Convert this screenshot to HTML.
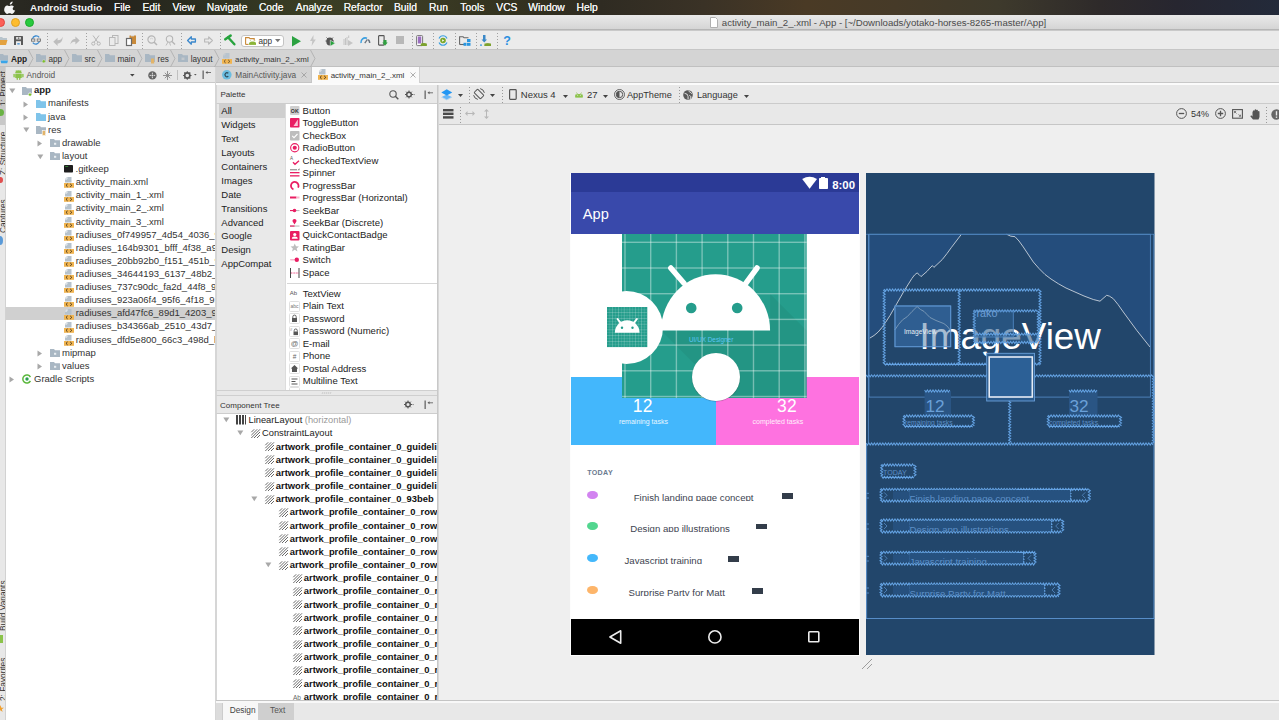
<!DOCTYPE html>
<html><head><meta charset="utf-8">
<style>
*{box-sizing:border-box;margin:0;padding:0}
html,body{width:1279px;height:720px;overflow:hidden;background:#efefef;font-family:"Liberation Sans",sans-serif;color:#222;position:relative}
.a{position:absolute}
.t{position:absolute;white-space:nowrap;line-height:1}
svg{overflow:visible}
</style></head><body>
<div class="a" style="left:0px;top:0px;width:1279px;height:15px;background:linear-gradient(90deg,#2b2a22 0%,#22211d 8%,#2c2f20 16%,#3a3e24 24%,#3b3c25 32%,#33321f 40%,#2f2b22 47%,#3a3226 55%,#4a3a25 63%,#463a28 70%,#3e3a2c 78%,#2e2a2a 86%,#272630 92%,#232a3a 100%);"></div>
<svg class="a" style="left:5px;top:1px;" width="11" height="13" viewBox="0 0 11 13"><path d="M7.6 0.5c0.1 0.9-0.3 1.7-0.8 2.2-0.5 0.6-1.3 1-2 0.9-0.1-0.8 0.3-1.7 0.8-2.2 0.5-0.6 1.4-0.9 2-0.9zM10.2 9.4c-0.3 0.7-0.5 1-0.9 1.6-0.6 0.9-1.4 1.9-2.4 1.9-0.9 0-1.1-0.6-2.3-0.6-1.2 0-1.5 0.6-2.4 0.6-1 0-1.700-0.9-2.3-1.8C-1.7 8.6-0.2 4.6 2 4.4c0.9 0 1.6 0.6 2.3 0.6 0.6 0 1.3-0.7 2.4-0.6 0.4 0 1.6 0.2 2.3 1.3-2 1.1-1.7 3.9 1.2 3.7z" fill="#f4f4f4"/></svg>
<span class="t" style="left:30px;top:3.00px;font-size:9.9px;color:#f4f4f4;font-weight:bold;letter-spacing:0.05px">Android Studio</span>
<span class="t" style="left:114px;top:3.00px;font-size:10.3px;color:#f0f0f0;font-weight:normal;text-shadow:0 0 0.3px #fff">File</span>
<span class="t" style="left:142.5px;top:3.00px;font-size:10.3px;color:#f0f0f0;font-weight:normal;text-shadow:0 0 0.3px #fff">Edit</span>
<span class="t" style="left:172.5px;top:3.00px;font-size:10.3px;color:#f0f0f0;font-weight:normal;text-shadow:0 0 0.3px #fff">View</span>
<span class="t" style="left:206.8px;top:3.00px;font-size:10.3px;color:#f0f0f0;font-weight:normal;text-shadow:0 0 0.3px #fff">Navigate</span>
<span class="t" style="left:258.9px;top:3.00px;font-size:10.3px;color:#f0f0f0;font-weight:normal;text-shadow:0 0 0.3px #fff">Code</span>
<span class="t" style="left:295.8px;top:3.00px;font-size:10.3px;color:#f0f0f0;font-weight:normal;text-shadow:0 0 0.3px #fff">Analyze</span>
<span class="t" style="left:343.7px;top:3.00px;font-size:10.3px;color:#f0f0f0;font-weight:normal;text-shadow:0 0 0.3px #fff">Refactor</span>
<span class="t" style="left:394px;top:3.00px;font-size:10.3px;color:#f0f0f0;font-weight:normal;text-shadow:0 0 0.3px #fff">Build</span>
<span class="t" style="left:429px;top:3.00px;font-size:10.3px;color:#f0f0f0;font-weight:normal;text-shadow:0 0 0.3px #fff">Run</span>
<span class="t" style="left:460.3px;top:3.00px;font-size:10.3px;color:#f0f0f0;font-weight:normal;text-shadow:0 0 0.3px #fff">Tools</span>
<span class="t" style="left:496.3px;top:3.00px;font-size:10.3px;color:#f0f0f0;font-weight:normal;text-shadow:0 0 0.3px #fff">VCS</span>
<span class="t" style="left:528.2px;top:3.00px;font-size:10.3px;color:#f0f0f0;font-weight:normal;text-shadow:0 0 0.3px #fff">Window</span>
<span class="t" style="left:576.6px;top:3.00px;font-size:10.3px;color:#f0f0f0;font-weight:normal;text-shadow:0 0 0.3px #fff">Help</span>
<div class="a" style="left:0px;top:15px;width:1279px;height:15px;background:linear-gradient(#e9e9e9,#d5d5d5);border-bottom:1px solid #b5b5b5"></div>
<div class="a" style="left:-4.3px;top:18px;width:9px;height:9px;border-radius:50%;background:#fc5f57;border:0.5px solid #e0443e"></div>
<div class="a" style="left:11px;top:18px;width:9px;height:9px;border-radius:50%;background:#fdbc2e;border:0.5px solid #dea123"></div>
<div class="a" style="left:25px;top:18px;width:9px;height:9px;border-radius:50%;background:#28c93f;border:0.5px solid #1aab29"></div>
<svg class="a" style="left:710px;top:17px;" width="8" height="11" viewBox="0 0 8 11"><path d="M0.5 0.5h5l2 2v8h-7z" fill="#fff" stroke="#b0b0b0" stroke-width="1"/></svg>
<span class="t" style="left:721.8px;top:18.00px;font-size:9.65px;color:#4a4a4a;font-weight:normal;">activity_main_2_.xml - App - [~/Downloads/yotako-horses-8265-master/App]</span>
<div class="a" style="left:0px;top:30px;width:1279px;height:20px;background:#ebebeb;border-top:1px solid #c9c9c9;border-bottom:1px solid #c6c6c6"></div>
<svg class="a" style="left:-2px;top:37px;" width="10" height="8" viewBox="0 0 10 8"><path d="M0 0h4l1 1h4v2H0z" fill="#b8c4cc"/><path d="M0 3h9.5l-1.5 5H0z" fill="#e3a13f"/></svg>
<svg class="a" style="left:14px;top:36px;" width="9" height="9" viewBox="0 0 9 9"><rect x="0" y="0" width="9" height="9" rx="0.6" fill="#5a5a5a"/><rect x="2.2" y="1" width="4.6" height="2.4" fill="#ebebeb"/><rect x="3.8" y="1.3" width="1.6" height="1.8" fill="#777"/><rect x="2" y="5.2" width="5" height="3.8" fill="#ebebeb"/><rect x="3.3" y="7.2" width="2.4" height="1.3" fill="#3a8ad0"/></svg>
<svg class="a" style="left:31px;top:35px;" width="10" height="10" viewBox="0 0 10 10"><path d="M1.5 4A3.8 3.8 0 0 1 8.2 2.3" fill="none" stroke="#3a8ad0" stroke-width="1.3"/><path d="M8.5 6A3.8 3.8 0 0 1 1.8 7.7" fill="none" stroke="#3a8ad0" stroke-width="1.3"/><rect x="0.5" y="4" width="3.3" height="2.2" fill="none" stroke="#777" stroke-width="0.9"/><rect x="6.2" y="4" width="3.3" height="2.2" fill="none" stroke="#777" stroke-width="0.9"/></svg>
<div class="a" style="left:47px;top:33px;width:1px;height:16px;background:repeating-linear-gradient(#a0a0a0 0 1px,transparent 1px 3px)"></div>
<svg class="a" style="left:53px;top:36px;" width="10" height="10" viewBox="0 0 10 10"><path d="M0.3 5.8L4.6 1.8V4.3C7.2 4.3 8.9 3.2 9.6 0.8 9.8 5 7.6 7.6 4.6 7.6V9.9z" fill="#bdbdbd"/></svg>
<svg class="a" style="left:70px;top:36px;" width="10" height="10" viewBox="0 0 10 10"><path d="M9.7 4.5L5.4 0.5V3C2.8 3 1.1 4.5 0.4 8.5 1.6 6.2 3 5.8 5.4 5.8V8.5z" fill="#bdbdbd"/></svg>
<div class="a" style="left:86px;top:33px;width:1px;height:16px;background:repeating-linear-gradient(#a0a0a0 0 1px,transparent 1px 3px)"></div>
<svg class="a" style="left:91px;top:35px;" width="10" height="11" viewBox="0 0 10 11"><path d="M2 0.5L7 7.5M8 0.5L3 7.5" stroke="#b0b0b0" stroke-width="0.9" fill="none"/><circle cx="2.3" cy="8.6" r="1.6" fill="none" stroke="#b0b0b0" stroke-width="0.9"/><circle cx="7.7" cy="8.6" r="1.6" fill="none" stroke="#b0b0b0" stroke-width="0.9"/></svg>
<svg class="a" style="left:109px;top:35px;" width="10" height="11" viewBox="0 0 10 11"><rect x="3.5" y="0.5" width="5.5" height="8" fill="none" stroke="#b8b8b8" stroke-width="1"/><rect x="0.5" y="2.5" width="5.5" height="8" fill="#ebebeb" stroke="#b8b8b8" stroke-width="1"/></svg>
<svg class="a" style="left:126px;top:35px;" width="11" height="11" viewBox="0 0 11 11"><rect x="3.5" y="0.5" width="6.5" height="8.5" fill="#c98a3a"/><rect x="5" y="0" width="3" height="1.3" fill="#ddd"/><rect x="0.5" y="3.5" width="5" height="7" fill="#fff" stroke="#6a6a6a" stroke-width="1.2"/></svg>
<div class="a" style="left:142px;top:33px;width:1px;height:16px;background:repeating-linear-gradient(#a0a0a0 0 1px,transparent 1px 3px)"></div>
<svg class="a" style="left:147px;top:35px;" width="11" height="11" viewBox="0 0 11 11"><circle cx="4.5" cy="4.5" r="3.6" fill="none" stroke="#b5b5b5" stroke-width="1.2"/><path d="M7 7l3 3" stroke="#b5b5b5" stroke-width="1.5"/><path d="M3 4q1.5-1.5 3 0" stroke="#c5c5c5" stroke-width="0.7" fill="none"/></svg>
<svg class="a" style="left:165px;top:35px;" width="11" height="11" viewBox="0 0 11 11"><circle cx="4.5" cy="4" r="3.2" fill="none" stroke="#b5b5b5" stroke-width="1.1"/><path d="M7 6.5l3 3" stroke="#b5b5b5" stroke-width="1.4"/><path d="M3 7l-2 3.5M4.5 7.5l1 3" stroke="#b5b5b5" stroke-width="0.9"/></svg>
<div class="a" style="left:181px;top:33px;width:1px;height:16px;background:repeating-linear-gradient(#a0a0a0 0 1px,transparent 1px 3px)"></div>
<svg class="a" style="left:187px;top:36px;" width="9" height="9" viewBox="0 0 9 9"><path d="M0.6 4.5L4.3 0.8V3h4.1v3H4.3v2.2z" fill="none" stroke="#3b88cc" stroke-width="1.3" stroke-linejoin="round"/></svg>
<svg class="a" style="left:204px;top:36px;" width="9" height="9" viewBox="0 0 9 9"><path d="M8.4 4.5L4.7 0.8V3H0.6v3h4.1v2.2z" fill="none" stroke="#b8b8b8" stroke-width="1.1" stroke-linejoin="round"/></svg>
<div class="a" style="left:220px;top:33px;width:1px;height:16px;background:repeating-linear-gradient(#a0a0a0 0 1px,transparent 1px 3px)"></div>
<svg class="a" style="left:224px;top:34px;" width="12" height="12" viewBox="0 0 12 12"><path d="M1.3 5.3L6.6 1.6" stroke="#27a33e" stroke-width="2.6" stroke-linecap="round"/><path d="M4.2 3.5L10.4 10.3" stroke="#27a33e" stroke-width="2.4" stroke-linecap="round"/></svg>
<div class="a" style="left:241px;top:34.5px;width:43px;height:12px;background:#fff;border:1px solid #c4c4c4;border-radius:3px"></div>
<svg class="a" style="left:245px;top:37px;" width="12" height="8" viewBox="0 0 12 8"><path d="M0.6 7.4V0.6h3.4l1 1h4.2v2" fill="none" stroke="#c98a3a" stroke-width="1.1"/><path d="M0.6 7.4h3" stroke="#c98a3a" stroke-width="1.1"/><path d="M4.2 7.6a3.2 3 0 0 1 6.8 0z" fill="#8bb437"/><rect x="4.2" y="5.6" width="6.8" height="2.2" fill="#8bb437"/><path d="M5.2 3.2l0.8 1.2M10 3.2l-0.8 1.2" stroke="#8bb437" stroke-width="0.6"/></svg>
<span class="t" style="left:258.5px;top:38.00px;font-size:8.2px;color:#333;font-weight:normal;">app</span>
<svg class="a" style="left:275px;top:39px;" width="6" height="4" viewBox="0 0 6 4"><path d="M0 0h5.5L2.75 3.2z" fill="#777"/></svg>
<svg class="a" style="left:291.5px;top:35.5px;" width="9" height="10.5" viewBox="0 0 9 10.5"><path d="M0 0L9 5.25 0 10.5z" fill="#2ba241"/></svg>
<svg class="a" style="left:310px;top:35px;" width="6" height="11" viewBox="0 0 6 11"><path d="M3.5 0L0 6h2.3L1.6 11 5.8 4.5H3.4z" fill="#c5c5c5"/></svg>
<svg class="a" style="left:325px;top:35.5px;" width="11" height="10" viewBox="0 0 11 10"><path d="M1.5 1.5l1.5 1.5M8 1.5L6.5 3M0.5 5h1.5M8 5h1" stroke="#555" stroke-width="0.9"/><ellipse cx="4.8" cy="5.5" rx="3.5" ry="4" fill="#555"/><path d="M5.3 4.2l5 3-5 3z" fill="#27a33e" stroke="#ebebeb" stroke-width="0.6"/></svg>
<svg class="a" style="left:343px;top:35px;" width="11" height="11" viewBox="0 0 11 11"><path d="M1 4v6M2.5 3v7M4 2v8" stroke="#c0c0c0" stroke-width="0.9"/><path d="M5 5l5 3-5 3z" fill="#c5c5c5"/><path d="M5.7 0.5v2.5" stroke="#c0c0c0" stroke-width="0.9"/></svg>
<svg class="a" style="left:360px;top:36px;" width="11" height="8" viewBox="0 0 11 8"><path d="M1 7A4.3 4.3 0 0 1 7 2.3" fill="none" stroke="#3a9fe0" stroke-width="1.6"/><path d="M4.8 7.2l2.6-3.8" stroke="#6a7580" stroke-width="1.3"/><path d="M8.2 3.6A4.3 4.3 0 0 1 9.7 7" fill="none" stroke="#6a7580" stroke-width="1.5"/></svg>
<svg class="a" style="left:378px;top:35px;" width="10" height="11" viewBox="0 0 10 11"><rect x="0.6" y="0.6" width="5.5" height="9.5" rx="0.6" fill="none" stroke="#555" stroke-width="1.1"/><path d="M5.5 5h3v2.5h1.2L7 10.8 4.3 7.5h1.2z" fill="#30a040"/></svg>
<div class="a" style="left:396px;top:36px;width:8px;height:8px;background:#b8b8b8;"></div>
<div class="a" style="left:412px;top:33px;width:1px;height:16px;background:repeating-linear-gradient(#a0a0a0 0 1px,transparent 1px 3px)"></div>
<svg class="a" style="left:416px;top:35px;" width="11" height="11" viewBox="0 0 11 11"><rect x="0.6" y="0.6" width="6" height="10" rx="0.8" fill="#fff" stroke="#777" stroke-width="1"/><rect x="1.8" y="1.5" width="3.5" height="7" fill="#9b6fc0"/><path d="M4.8 10.5a3 2.6 0 0 1 6 0z" fill="#7ca22e"/><rect x="4.8" y="8.5" width="6" height="2.5" fill="#7ca22e"/></svg>
<div class="a" style="left:433px;top:33px;width:1px;height:16px;background:repeating-linear-gradient(#a0a0a0 0 1px,transparent 1px 3px)"></div>
<svg class="a" style="left:438px;top:35px;" width="10" height="11" viewBox="0 0 10 11"><path d="M1 3.5A4.3 4.3 0 0 1 9 3.5M9 7.5A4.3 4.3 0 0 1 1 7.5" fill="none" stroke="#3aa0e0" stroke-width="1.1"/><circle cx="5" cy="5.5" r="2.8" fill="#7aa82a"/><path d="M4.2 4.3l2 1.2-2 1.2z" fill="#fff"/></svg>
<div class="a" style="left:455px;top:33px;width:1px;height:16px;background:repeating-linear-gradient(#a0a0a0 0 1px,transparent 1px 3px)"></div>
<svg class="a" style="left:459px;top:36px;" width="12" height="10" viewBox="0 0 12 10"><path d="M0.6 8.5V0.8h3.5l1 1H9.5" fill="none" stroke="#666" stroke-width="1.1"/><path d="M0.6 8.5H5" stroke="#666" stroke-width="1.1"/><rect x="8" y="3" width="3.5" height="3" fill="#2a96e0"/><rect x="4.5" y="6.8" width="3" height="3" fill="#2a96e0"/><rect x="8" y="6.8" width="3.5" height="3" fill="#2a96e0"/></svg>
<div class="a" style="left:476px;top:33px;width:1px;height:16px;background:repeating-linear-gradient(#a0a0a0 0 1px,transparent 1px 3px)"></div>
<svg class="a" style="left:480px;top:35px;" width="11" height="11" viewBox="0 0 11 11"><rect x="3" y="0" width="2.5" height="5" fill="#3a88c8"/><path d="M1.5 4.5h5.5L4.25 7.5z" fill="#3a88c8"/><rect x="0" y="9.5" width="2" height="1.2" fill="#2a96e0"/><path d="M4.5 11a3 2.6 0 0 1 6.5 0z" fill="#7ca22e"/><rect x="4.5" y="8.5" width="6.5" height="2.5" fill="#7ca22e"/></svg>
<div class="a" style="left:497px;top:33px;width:1px;height:16px;background:repeating-linear-gradient(#a0a0a0 0 1px,transparent 1px 3px)"></div>
<span class="t" style="left:503.3px;top:35.00px;font-size:12.5px;color:#2a90e0;font-weight:bold;">?</span>
<div class="a" style="left:0px;top:50px;width:1279px;height:17px;background:#d4d4d4;border-bottom:1px solid #c0c0c0"></div>
<svg class="a" style="left:-1px;top:54px;" width="10" height="10" viewBox="0 0 10 10"><path d="M0 0h4l1 1.2h4V6H0z" fill="#a9b7c3"/><path d="M1.5 6.5h7.5l-0.8 2.8h-6z" fill="#3aa5e8"/></svg>
<span class="t" style="left:11px;top:55.00px;font-size:8.3px;color:#222;font-weight:bold;">App</span>
<svg class="a" style="left:28px;top:50px;" width="6" height="17" viewBox="0 0 6 17"><path d="M0.5 0L5 8.5 0.5 17" fill="none" stroke="#b0b0b0" stroke-width="0.9"/></svg>
<svg class="a" style="left:36px;top:54px;" width="10" height="10" viewBox="0 0 10 10"><path d="M0 0h4l1 1.2h5V8H0z" fill="#a9b7c3"/><circle cx="7.8" cy="7.3" r="1.6" fill="#7cc02a" stroke="#d4d4d4" stroke-width="0.6"/></svg>
<span class="t" style="left:48.5px;top:56.00px;font-size:8.2px;color:#333;font-weight:normal;">app</span>
<svg class="a" style="left:64px;top:50px;" width="6" height="17" viewBox="0 0 6 17"><path d="M0.5 0L5 8.5 0.5 17" fill="none" stroke="#b0b0b0" stroke-width="0.9"/></svg>
<svg class="a" style="left:72px;top:54px;" width="10" height="10" viewBox="0 0 10 10"><path d="M0 0h4l1 1.2h5V8H0z" fill="#a9b7c3"/></svg>
<span class="t" style="left:84.5px;top:56.00px;font-size:8.2px;color:#333;font-weight:normal;">src</span>
<svg class="a" style="left:97px;top:50px;" width="6" height="17" viewBox="0 0 6 17"><path d="M0.5 0L5 8.5 0.5 17" fill="none" stroke="#b0b0b0" stroke-width="0.9"/></svg>
<svg class="a" style="left:105px;top:54px;" width="10" height="10" viewBox="0 0 10 10"><path d="M0 0h4l1 1.2h5V8H0z" fill="#a9b7c3"/></svg>
<span class="t" style="left:117.5px;top:56.00px;font-size:8.2px;color:#333;font-weight:normal;">main</span>
<svg class="a" style="left:137px;top:50px;" width="6" height="17" viewBox="0 0 6 17"><path d="M0.5 0L5 8.5 0.5 17" fill="none" stroke="#b0b0b0" stroke-width="0.9"/></svg>
<svg class="a" style="left:145px;top:54px;" width="10" height="10" viewBox="0 0 10 10"><path d="M0 0h4l1 1.2h5V8H0z" fill="#a9b7c3"/><rect x="6" y="4.5" width="3.2" height="5" fill="#e2b46a"/></svg>
<span class="t" style="left:157.6px;top:56.00px;font-size:8.2px;color:#333;font-weight:normal;">res</span>
<svg class="a" style="left:170px;top:50px;" width="6" height="17" viewBox="0 0 6 17"><path d="M0.5 0L5 8.5 0.5 17" fill="none" stroke="#b0b0b0" stroke-width="0.9"/></svg>
<svg class="a" style="left:178px;top:54px;" width="10" height="9" viewBox="0 0 10 9"><path d="M0 0h4l1 1.2h5V8H0z" fill="#a9b7c3"/><rect x="3.5" y="3.5" width="3" height="2.5" fill="#d4d4d4" opacity="0.6"/></svg>
<span class="t" style="left:190.7px;top:56.00px;font-size:8.2px;color:#333;font-weight:normal;">layout</span>
<svg class="a" style="left:214px;top:50px;" width="6" height="17" viewBox="0 0 6 17"><path d="M0.5 0L5 8.5 0.5 17" fill="none" stroke="#b0b0b0" stroke-width="0.9"/></svg>
<svg class="a" style="left:222px;top:53px;" width="10" height="11" viewBox="0 0 10 11"><path d="M3 0h4.5v5.5H1V2z" fill="#b8c4ce"/><path d="M3 0v2H1" fill="none" stroke="#d4d4d4" stroke-width="0.6"/><rect x="0" y="6" width="10" height="4.8" fill="#f0b450"/><path d="M3.6 6.9L2 8.4l1.6 1.5M6.2 6.9l1.6 1.5-1.6 1.5" fill="none" stroke="#5a4a30" stroke-width="0.9"/></svg>
<span class="t" style="left:235px;top:56.00px;font-size:7.95px;color:#333;font-weight:normal;">activity_main_2_.xml</span>
<svg class="a" style="left:310px;top:50px;" width="6" height="17" viewBox="0 0 6 17"><path d="M0.5 0L5 8.5 0.5 17" fill="none" stroke="#b0b0b0" stroke-width="0.9"/></svg>
<div class="a" style="left:0px;top:67px;width:6px;height:653px;background:#e8e8e8;border-right:1px solid #d2d2d2"></div>
<div class="a" style="left:0px;top:67px;width:5px;height:58px;background:#c8c8c8;"></div>
<div class="a" style="left:0;top:0;width:5px;height:720px;overflow:hidden">
<span class="t" style="left:-1.5px;top:106px;font-size:8.3px;color:#333;transform-origin:0 0;transform:rotate(-90deg)">1: Project</span>
<div class="a" style="left:-3px;top:109px;width:7px;height:7px;border-radius:50%;background:#6ab344"></div>
<span class="t" style="left:-1.5px;top:175px;font-size:8.3px;color:#333;transform-origin:0 0;transform:rotate(-90deg)">Z: Structure</span>
<div class="a" style="left:-2px;top:177px;width:5px;height:6px;border-radius:50%;background:#e05050"></div>
<span class="t" style="left:-1.5px;top:233px;font-size:8.3px;color:#333;transform-origin:0 0;transform:rotate(-90deg)">Captures</span>
<div class="a" style="left:-3px;top:236px;width:6px;height:9px;border-radius:50%;background:#5a9ad8"></div>
<span class="t" style="left:-1.5px;top:631px;font-size:8.3px;color:#333;transform-origin:0 0;transform:rotate(-90deg)">Build Variants</span>
<div class="a" style="left:-2px;top:635px;width:5px;height:8px;background:#8bc34a"></div>
<span class="t" style="left:-1.5px;top:701px;font-size:8.3px;color:#333;transform-origin:0 0;transform:rotate(-90deg)">2: Favorites</span>
<div class="a" style="left:-3px;top:705px;width:7px;height:7px;background:#f0a030;clip-path:polygon(50% 0,62% 38%,100% 38%,70% 60%,80% 100%,50% 75%,20% 100%,30% 60%,0 38%,38% 38%)"></div>
</div>
<div class="a" style="left:6px;top:67px;width:209px;height:16px;background:#e7e7e7;border-bottom:1px solid #c9c9c9"></div>
<svg class="a" style="left:13px;top:69px;" width="11" height="11" viewBox="0 0 11 11"><path d="M2.2 4.3a3.3 3 0 0 1 6.6 0z" fill="#8bc34a"/><path d="M3 1.2l1 1.5M8 1.2l-1 1.5" stroke="#8bc34a" stroke-width="0.7"/><rect x="2.2" y="4.8" width="6.6" height="4.3" rx="0.6" fill="#8bc34a"/><rect x="0.4" y="4.8" width="1.4" height="3.6" rx="0.7" fill="#8bc34a"/><rect x="9.2" y="4.8" width="1.4" height="3.6" rx="0.7" fill="#8bc34a"/><rect x="3.6" y="8.6" width="1.3" height="2.3" rx="0.6" fill="#8bc34a"/><rect x="6.1" y="8.6" width="1.3" height="2.3" rx="0.6" fill="#8bc34a"/></svg>
<span class="t" style="left:26.5px;top:71.00px;font-size:8.3px;color:#555;font-weight:normal;">Android</span>
<svg class="a" style="left:129.8px;top:73.9px;" width="5" height="3" viewBox="0 0 5 3"><path d="M0 0h4.6L2.3 2.6z" fill="#444"/></svg>
<svg class="a" style="left:147.5px;top:70.5px;" width="9" height="9" viewBox="0 0 9 9"><circle cx="4.4" cy="4.4" r="4.2" fill="#666"/><circle cx="4.4" cy="4.4" r="0.9" fill="#e7e7e7"/><path d="M4.4 1.6v1.5M4.4 5.7v1.5M1.6 4.4h1.5M5.7 4.4h1.5" stroke="#e7e7e7" stroke-width="0.9"/></svg>
<svg class="a" style="left:162.5px;top:70.5px;" width="9" height="9" viewBox="0 0 9 9"><path d="M4.5 0v9M0 4.5h9M1.8 1.8l5.4 5.4M7.2 1.8L1.8 7.2" stroke="#888" stroke-width="0.9"/></svg>
<div class="a" style="left:177px;top:70px;width:1px;height:10px;background:#c0c0c0;"></div>
<svg class="a" style="left:182.5px;top:70.5px;" width="10" height="9" viewBox="0 0 10 9"><circle cx="4.3" cy="4.5" r="2.6" fill="none" stroke="#555" stroke-width="1.6"/><path d="M4.3 0.3v1.5M4.3 7.2v1.5M0.1 4.5h1.5M7 4.5h1.5M1.3 1.5l1 1M6.3 6.5l1 1M7.3 1.5l-1 1M2.3 6.5l-1 1" stroke="#555" stroke-width="1.1"/></svg>
<svg class="a" style="left:194px;top:74px;" width="3" height="2" viewBox="0 0 3 2"><path d="M0 0h2.6L1.3 1.6z" fill="#555"/></svg>
<svg class="a" style="left:202px;top:70px;" width="10" height="10" viewBox="0 0 10 10"><rect x="0.5" y="0.5" width="1.3" height="8.5" fill="#666"/><path d="M3.5 2.5l2-1.5v3z" fill="#555"/><path d="M5 2.5h4" stroke="#555" stroke-width="0.8"/></svg>
<div class="a" style="left:6px;top:83px;width:209px;height:637px;background:#fff;"></div>
<div class="a" style="left:215px;top:67px;width:1px;height:653px;background:#d6d6d6;"></div>
<div class="a" style="left:6px;top:307.2px;width:209px;height:12.7px;background:#d0d0d0;"></div>
<div class="a" style="left:6px;top:83px;width:209px;height:637px;overflow:hidden">
<svg class="a" style="left:2.5px;top:5.099999999999994px;" width="7" height="6" viewBox="0 0 7 6"><path d="M0.3 0.5h6L3.3 5.2z" fill="#a8a8a8"/></svg>
<svg class="a" style="left:16px;top:3.5999999999999943px;" width="10" height="10" viewBox="0 0 10 10"><path d="M0 0h4l1 1.2h5V8H0z" fill="#a9b7c3"/><circle cx="8" cy="7.6" r="1.7" fill="#7cc02a" stroke="#fff" stroke-width="0.7"/></svg>
<span class="t" style="left:28px;top:2.00px;font-size:9.5px;color:#222;font-weight:bold;">app</span>
<svg class="a" style="left:17px;top:17.72px;" width="6" height="7" viewBox="0 0 6 7"><path d="M0.5 0.5L5 3.5 0.5 6.5z" fill="#a8a8a8"/></svg>
<svg class="a" style="left:30px;top:16.72px;" width="10" height="10" viewBox="0 0 10 10"><path d="M0 0h4l1 1.2h5V8H0z" fill="#7fc4ea"/></svg>
<span class="t" style="left:42px;top:15.00px;font-size:9.5px;color:#333;font-weight:normal;">manifests</span>
<svg class="a" style="left:17px;top:30.83999999999999px;" width="6" height="7" viewBox="0 0 6 7"><path d="M0.5 0.5L5 3.5 0.5 6.5z" fill="#a8a8a8"/></svg>
<svg class="a" style="left:30px;top:29.83999999999999px;" width="10" height="10" viewBox="0 0 10 10"><path d="M0 0h4l1 1.2h5V8H0z" fill="#7fc4ea"/></svg>
<span class="t" style="left:42px;top:29.00px;font-size:9.5px;color:#333;font-weight:normal;">java</span>
<svg class="a" style="left:16.5px;top:44.459999999999994px;" width="7" height="6" viewBox="0 0 7 6"><path d="M0.3 0.5h6L3.3 5.2z" fill="#a8a8a8"/></svg>
<svg class="a" style="left:30px;top:42.959999999999994px;" width="10" height="10" viewBox="0 0 10 10"><path d="M0 0h4l1 1.2h5V8H0z" fill="#a9b7c3"/><rect x="6.2" y="4.6" width="3.4" height="5" fill="#e2b46a" stroke="#fff" stroke-width="0.6"/></svg>
<span class="t" style="left:42px;top:42.00px;font-size:9.5px;color:#333;font-weight:normal;">res</span>
<svg class="a" style="left:31px;top:57.08000000000001px;" width="6" height="7" viewBox="0 0 6 7"><path d="M0.5 0.5L5 3.5 0.5 6.5z" fill="#a8a8a8"/></svg>
<svg class="a" style="left:44px;top:56.08000000000001px;" width="10" height="10" viewBox="0 0 10 10"><path d="M0 0h4l1 1.2h5V8H0z" fill="#a9b7c3"/><rect x="4" y="3.8" width="2.2" height="2" fill="#e8edf1"/></svg>
<span class="t" style="left:56px;top:55.00px;font-size:9.5px;color:#333;font-weight:normal;">drawable</span>
<svg class="a" style="left:30.5px;top:70.69999999999999px;" width="7" height="6" viewBox="0 0 7 6"><path d="M0.3 0.5h6L3.3 5.2z" fill="#a8a8a8"/></svg>
<svg class="a" style="left:44px;top:69.19999999999999px;" width="10" height="10" viewBox="0 0 10 10"><path d="M0 0h4l1 1.2h5V8H0z" fill="#a9b7c3"/><rect x="4" y="3.8" width="2.2" height="2" fill="#e8edf1"/></svg>
<span class="t" style="left:56px;top:68.00px;font-size:9.5px;color:#333;font-weight:normal;">layout</span>
<svg class="a" style="left:58px;top:82.32px;" width="9" height="8" viewBox="0 0 9 8"><rect x="0" y="0" width="9" height="7.5" rx="0.8" fill="#1e1e1e"/><rect x="1.2" y="1.2" width="3" height="0.8" fill="#3c9a3c"/></svg>
<span class="t" style="left:69.5px;top:81.00px;font-size:9.5px;color:#333;font-weight:normal;">.gitkeep</span>
<svg class="a" style="left:58px;top:94.44px;" width="10" height="11" viewBox="0 0 10 11"><path d="M3 0h4.5v5.5H1V2z" fill="#b6c2cc"/><path d="M3 0.2v1.9H1.1" fill="none" stroke="#fff" stroke-width="0.7"/><rect x="0" y="6" width="10" height="4.8" fill="#f0b450"/><path d="M3.6 6.9L2 8.4l1.6 1.5M6.2 6.9l1.6 1.5-1.6 1.5" fill="none" stroke="#4a3a20" stroke-width="1"/></svg>
<span class="t" style="left:69.7px;top:94.00px;font-size:9.5px;color:#333;font-weight:normal;">activity_main.xml</span>
<svg class="a" style="left:58px;top:107.56px;" width="10" height="11" viewBox="0 0 10 11"><path d="M3 0h4.5v5.5H1V2z" fill="#b6c2cc"/><path d="M3 0.2v1.9H1.1" fill="none" stroke="#fff" stroke-width="0.7"/><rect x="0" y="6" width="10" height="4.8" fill="#f0b450"/><path d="M3.6 6.9L2 8.4l1.6 1.5M6.2 6.9l1.6 1.5-1.6 1.5" fill="none" stroke="#4a3a20" stroke-width="1"/></svg>
<span class="t" style="left:69.7px;top:107.00px;font-size:9.5px;color:#333;font-weight:normal;">activity_main_1_.xml</span>
<svg class="a" style="left:58px;top:120.68px;" width="10" height="11" viewBox="0 0 10 11"><path d="M3 0h4.5v5.5H1V2z" fill="#b6c2cc"/><path d="M3 0.2v1.9H1.1" fill="none" stroke="#fff" stroke-width="0.7"/><rect x="0" y="6" width="10" height="4.8" fill="#f0b450"/><path d="M3.6 6.9L2 8.4l1.6 1.5M6.2 6.9l1.6 1.5-1.6 1.5" fill="none" stroke="#4a3a20" stroke-width="1"/></svg>
<span class="t" style="left:69.7px;top:120.00px;font-size:9.5px;color:#333;font-weight:normal;">activity_main_2_.xml</span>
<svg class="a" style="left:58px;top:133.8px;" width="10" height="11" viewBox="0 0 10 11"><path d="M3 0h4.5v5.5H1V2z" fill="#b6c2cc"/><path d="M3 0.2v1.9H1.1" fill="none" stroke="#fff" stroke-width="0.7"/><rect x="0" y="6" width="10" height="4.8" fill="#f0b450"/><path d="M3.6 6.9L2 8.4l1.6 1.5M6.2 6.9l1.6 1.5-1.6 1.5" fill="none" stroke="#4a3a20" stroke-width="1"/></svg>
<span class="t" style="left:69.7px;top:134.00px;font-size:9.5px;color:#333;font-weight:normal;">activity_main_3_.xml</span>
<svg class="a" style="left:58px;top:146.92000000000002px;" width="10" height="11" viewBox="0 0 10 11"><path d="M3 0h4.5v5.5H1V2z" fill="#b6c2cc"/><path d="M3 0.2v1.9H1.1" fill="none" stroke="#fff" stroke-width="0.7"/><rect x="0" y="6" width="10" height="4.8" fill="#f0b450"/><path d="M3.6 6.9L2 8.4l1.6 1.5M6.2 6.9l1.6 1.5-1.6 1.5" fill="none" stroke="#4a3a20" stroke-width="1"/></svg>
<span class="t" style="left:69.7px;top:147.00px;font-size:9.5px;color:#333;font-weight:normal;">radiuses_0f749957_4d54_4036_9</span>
<svg class="a" style="left:58px;top:160.04000000000002px;" width="10" height="11" viewBox="0 0 10 11"><path d="M3 0h4.5v5.5H1V2z" fill="#b6c2cc"/><path d="M3 0.2v1.9H1.1" fill="none" stroke="#fff" stroke-width="0.7"/><rect x="0" y="6" width="10" height="4.8" fill="#f0b450"/><path d="M3.6 6.9L2 8.4l1.6 1.5M6.2 6.9l1.6 1.5-1.6 1.5" fill="none" stroke="#4a3a20" stroke-width="1"/></svg>
<span class="t" style="left:69.7px;top:160.00px;font-size:9.5px;color:#333;font-weight:normal;">radiuses_164b9301_bfff_4f38_a9</span>
<svg class="a" style="left:58px;top:173.16000000000003px;" width="10" height="11" viewBox="0 0 10 11"><path d="M3 0h4.5v5.5H1V2z" fill="#b6c2cc"/><path d="M3 0.2v1.9H1.1" fill="none" stroke="#fff" stroke-width="0.7"/><rect x="0" y="6" width="10" height="4.8" fill="#f0b450"/><path d="M3.6 6.9L2 8.4l1.6 1.5M6.2 6.9l1.6 1.5-1.6 1.5" fill="none" stroke="#4a3a20" stroke-width="1"/></svg>
<span class="t" style="left:69.7px;top:173.00px;font-size:9.5px;color:#333;font-weight:normal;">radiuses_20bb92b0_f151_451b_9</span>
<svg class="a" style="left:58px;top:186.27999999999997px;" width="10" height="11" viewBox="0 0 10 11"><path d="M3 0h4.5v5.5H1V2z" fill="#b6c2cc"/><path d="M3 0.2v1.9H1.1" fill="none" stroke="#fff" stroke-width="0.7"/><rect x="0" y="6" width="10" height="4.8" fill="#f0b450"/><path d="M3.6 6.9L2 8.4l1.6 1.5M6.2 6.9l1.6 1.5-1.6 1.5" fill="none" stroke="#4a3a20" stroke-width="1"/></svg>
<span class="t" style="left:69.7px;top:186.00px;font-size:9.5px;color:#333;font-weight:normal;">radiuses_34644193_6137_48b2_8</span>
<svg class="a" style="left:58px;top:199.39999999999998px;" width="10" height="11" viewBox="0 0 10 11"><path d="M3 0h4.5v5.5H1V2z" fill="#b6c2cc"/><path d="M3 0.2v1.9H1.1" fill="none" stroke="#fff" stroke-width="0.7"/><rect x="0" y="6" width="10" height="4.8" fill="#f0b450"/><path d="M3.6 6.9L2 8.4l1.6 1.5M6.2 6.9l1.6 1.5-1.6 1.5" fill="none" stroke="#4a3a20" stroke-width="1"/></svg>
<span class="t" style="left:69.7px;top:199.00px;font-size:9.5px;color:#333;font-weight:normal;">radiuses_737c90dc_fa2d_44f8_9c</span>
<svg class="a" style="left:58px;top:212.51999999999998px;" width="10" height="11" viewBox="0 0 10 11"><path d="M3 0h4.5v5.5H1V2z" fill="#b6c2cc"/><path d="M3 0.2v1.9H1.1" fill="none" stroke="#fff" stroke-width="0.7"/><rect x="0" y="6" width="10" height="4.8" fill="#f0b450"/><path d="M3.6 6.9L2 8.4l1.6 1.5M6.2 6.9l1.6 1.5-1.6 1.5" fill="none" stroke="#4a3a20" stroke-width="1"/></svg>
<span class="t" style="left:69.7px;top:212.00px;font-size:9.5px;color:#333;font-weight:normal;">radiuses_923a06f4_95f6_4f18_91</span>
<svg class="a" style="left:58px;top:225.64px;" width="10" height="11" viewBox="0 0 10 11"><path d="M3 0h4.5v5.5H1V2z" fill="#b6c2cc"/><path d="M3 0.2v1.9H1.1" fill="none" stroke="#fff" stroke-width="0.7"/><rect x="0" y="6" width="10" height="4.8" fill="#f0b450"/><path d="M3.6 6.9L2 8.4l1.6 1.5M6.2 6.9l1.6 1.5-1.6 1.5" fill="none" stroke="#4a3a20" stroke-width="1"/></svg>
<span class="t" style="left:69.7px;top:225.00px;font-size:9.5px;color:#333;font-weight:normal;">radiuses_afd47fc6_89d1_4203_9</span>
<svg class="a" style="left:58px;top:238.76px;" width="10" height="11" viewBox="0 0 10 11"><path d="M3 0h4.5v5.5H1V2z" fill="#b6c2cc"/><path d="M3 0.2v1.9H1.1" fill="none" stroke="#fff" stroke-width="0.7"/><rect x="0" y="6" width="10" height="4.8" fill="#f0b450"/><path d="M3.6 6.9L2 8.4l1.6 1.5M6.2 6.9l1.6 1.5-1.6 1.5" fill="none" stroke="#4a3a20" stroke-width="1"/></svg>
<span class="t" style="left:69.7px;top:238.00px;font-size:9.5px;color:#333;font-weight:normal;">radiuses_b34366ab_2510_43d7_9</span>
<svg class="a" style="left:58px;top:251.88px;" width="10" height="11" viewBox="0 0 10 11"><path d="M3 0h4.5v5.5H1V2z" fill="#b6c2cc"/><path d="M3 0.2v1.9H1.1" fill="none" stroke="#fff" stroke-width="0.7"/><rect x="0" y="6" width="10" height="4.8" fill="#f0b450"/><path d="M3.6 6.9L2 8.4l1.6 1.5M6.2 6.9l1.6 1.5-1.6 1.5" fill="none" stroke="#4a3a20" stroke-width="1"/></svg>
<span class="t" style="left:69.7px;top:252.00px;font-size:9.5px;color:#333;font-weight:normal;">radiuses_dfd5e800_66c3_498d_b</span>
<svg class="a" style="left:31px;top:267.0px;" width="6" height="7" viewBox="0 0 6 7"><path d="M0.5 0.5L5 3.5 0.5 6.5z" fill="#a8a8a8"/></svg>
<svg class="a" style="left:44px;top:266.0px;" width="10" height="10" viewBox="0 0 10 10"><path d="M0 0h4l1 1.2h5V8H0z" fill="#a9b7c3"/><rect x="4" y="3.8" width="2.2" height="2" fill="#e8edf1"/></svg>
<span class="t" style="left:56px;top:265.00px;font-size:9.5px;color:#333;font-weight:normal;">mipmap</span>
<svg class="a" style="left:31px;top:280.12px;" width="6" height="7" viewBox="0 0 6 7"><path d="M0.5 0.5L5 3.5 0.5 6.5z" fill="#a8a8a8"/></svg>
<svg class="a" style="left:44px;top:279.12px;" width="10" height="10" viewBox="0 0 10 10"><path d="M0 0h4l1 1.2h5V8H0z" fill="#a9b7c3"/><rect x="4" y="3.8" width="2.2" height="2" fill="#e8edf1"/></svg>
<span class="t" style="left:56px;top:278.00px;font-size:9.5px;color:#333;font-weight:normal;">values</span>
<svg class="a" style="left:3px;top:293.24px;" width="6" height="7" viewBox="0 0 6 7"><path d="M0.5 0.5L5 3.5 0.5 6.5z" fill="#a8a8a8"/></svg>
<svg class="a" style="left:16px;top:291.44px;" width="10" height="10" viewBox="0 0 10 10"><path d="M8.4 3.2A4 4 0 1 0 8.4 6.8" fill="none" stroke="#5cb83c" stroke-width="1.5"/><circle cx="5" cy="5" r="1.7" fill="#2aa050"/></svg>
<span class="t" style="left:28px;top:291.00px;font-size:9.5px;color:#333;font-weight:normal;">Gradle Scripts</span>
</div>
<div class="a" style="left:216px;top:67px;width:1063px;height:16px;background:#e6e6e6;border-bottom:1px solid #c8c8c8"></div>
<div class="a" style="left:216px;top:67px;width:95.7px;height:16px;background:#d3d3d3;border-bottom:1px solid #c4c4c4;border-right:1px solid #c6c6c6"></div>
<svg class="a" style="left:222.3px;top:70.1px;" width="9.6" height="9.6" viewBox="0 0 9.6 9.6"><circle cx="4.8" cy="4.8" r="4.8" fill="#6cbde0"/><path d="M6.3 3.3A2 2 0 1 0 6.3 6.3" fill="none" stroke="#2d4a5a" stroke-width="1.2"/></svg>
<span class="t" style="left:235.3px;top:72.00px;font-size:8.25px;color:#555;font-weight:normal;">MainActivity.java</span>
<svg class="a" style="left:301px;top:72px;" width="6" height="6" viewBox="0 0 6 6"><path d="M0.5 0.5l5 5M5.5 0.5l-5 5" stroke="#9a9a9a" stroke-width="0.8"/></svg>
<div class="a" style="left:311.7px;top:67px;width:108.3px;height:17px;background:#fafafa;border-right:1px solid #d0d0d0"></div>
<svg class="a" style="left:318px;top:69px;" width="10" height="11" viewBox="0 0 10 11"><path d="M3 0h4.5v5.5H1V2z" fill="#b6c2cc"/><path d="M3 0.2v1.9H1.1" fill="none" stroke="#fff" stroke-width="0.7"/><rect x="0" y="6" width="10" height="4.8" fill="#f0b450"/><path d="M3.6 6.9L2 8.4l1.6 1.5M6.2 6.9l1.6 1.5-1.6 1.5" fill="none" stroke="#4a3a20" stroke-width="1"/></svg>
<span class="t" style="left:330.7px;top:72.00px;font-size:7.95px;color:#333;font-weight:normal;">activity_main_2_.xml</span>
<svg class="a" style="left:409.5px;top:72px;" width="6" height="6" viewBox="0 0 6 6"><path d="M0.5 0.5l5 5M5.5 0.5l-5 5" stroke="#9a9a9a" stroke-width="0.8"/></svg>
<div class="a" style="left:216px;top:83px;width:1063px;height:2px;background:#fbfbfb;"></div>
<div class="a" style="left:216px;top:85px;width:221px;height:305px;background:#e9e9e9;border-left:1px solid #d6d6d6"></div>
<div class="a" style="left:216px;top:85px;width:221px;height:18.5px;background:#e9e9e9;border-bottom:1px solid #cdcdcd;border-left:1px solid #d6d6d6"></div>
<span class="t" style="left:220.5px;top:91.00px;font-size:8.0px;color:#333;font-weight:normal;">Palette</span>
<svg class="a" style="left:389px;top:90px;" width="10" height="10" viewBox="0 0 10 10"><circle cx="4" cy="4" r="3.2" fill="none" stroke="#555" stroke-width="1.1"/><path d="M6.3 6.3l3 3" stroke="#555" stroke-width="1.4"/></svg>
<svg class="a" style="left:405px;top:90px;" width="10" height="9" viewBox="0 0 10 9"><circle cx="4" cy="4.5" r="2.3" fill="none" stroke="#555" stroke-width="1.5"/><path d="M4 0.5v1.5M4 7v1.5M0 4.5h1.5M6.5 4.5h1.5M1.2 1.7l1 1M5.8 6.3l1 1M6.8 1.7l-1 1M2.2 6.3l-1 1" stroke="#555" stroke-width="1"/><path d="M8.2 4.2h1.8L9.1 5.2z" fill="#555"/></svg>
<svg class="a" style="left:424px;top:89.5px;" width="10" height="10" viewBox="0 0 10 10"><rect x="0.5" y="0.5" width="1.3" height="8.5" fill="#666"/><path d="M3.5 2.8l2-1.5v3z" fill="#555"/><path d="M5 2.8h4" stroke="#555" stroke-width="0.8"/></svg>
<div class="a" style="left:437px;top:85px;width:2px;height:615px;background:#d8d8d8;border-left:1px solid #c8c8c8"></div>
<div class="a" style="left:217px;top:103.5px;width:68.5px;height:286.5px;background:#e9e9e9;border-right:1px solid #dcdcdc"></div>
<div class="a" style="left:219.3px;top:104.2px;width:66px;height:13.6px;background:#cfcfcf;"></div>
<span class="t" style="left:221.3px;top:106.00px;font-size:9.5px;color:#111;font-weight:normal;">All</span>
<span class="t" style="left:221.3px;top:120.00px;font-size:9.5px;color:#222;font-weight:normal;">Widgets</span>
<span class="t" style="left:221.3px;top:134.00px;font-size:9.5px;color:#222;font-weight:normal;">Text</span>
<span class="t" style="left:221.3px;top:148.00px;font-size:9.5px;color:#222;font-weight:normal;">Layouts</span>
<span class="t" style="left:221.3px;top:162.00px;font-size:9.5px;color:#222;font-weight:normal;">Containers</span>
<span class="t" style="left:221.3px;top:176.00px;font-size:9.5px;color:#222;font-weight:normal;">Images</span>
<span class="t" style="left:221.3px;top:190.00px;font-size:9.5px;color:#222;font-weight:normal;">Date</span>
<span class="t" style="left:221.3px;top:204.00px;font-size:9.5px;color:#222;font-weight:normal;">Transitions</span>
<span class="t" style="left:221.3px;top:218.00px;font-size:9.5px;color:#222;font-weight:normal;">Advanced</span>
<span class="t" style="left:221.3px;top:231.00px;font-size:9.5px;color:#222;font-weight:normal;">Google</span>
<span class="t" style="left:221.3px;top:245.00px;font-size:9.5px;color:#222;font-weight:normal;">Design</span>
<span class="t" style="left:221.3px;top:259.00px;font-size:9.5px;color:#222;font-weight:normal;">AppCompat</span>
<div class="a" style="left:286px;top:103.5px;width:151px;height:286.5px;background:#fff;"></div>
<span class="t" style="left:302.6px;top:106.00px;font-size:9.55px;color:#222;font-weight:normal;">Button</span>
<span class="t" style="left:302.6px;top:118.00px;font-size:9.55px;color:#222;font-weight:normal;">ToggleButton</span>
<span class="t" style="left:302.6px;top:131.00px;font-size:9.55px;color:#222;font-weight:normal;">CheckBox</span>
<span class="t" style="left:302.6px;top:143.00px;font-size:9.55px;color:#222;font-weight:normal;">RadioButton</span>
<span class="t" style="left:302.6px;top:156.00px;font-size:9.55px;color:#222;font-weight:normal;">CheckedTextView</span>
<span class="t" style="left:302.6px;top:168.00px;font-size:9.55px;color:#222;font-weight:normal;">Spinner</span>
<span class="t" style="left:302.6px;top:181.00px;font-size:9.55px;color:#222;font-weight:normal;">ProgressBar</span>
<span class="t" style="left:302.6px;top:193.00px;font-size:9.55px;color:#222;font-weight:normal;">ProgressBar (Horizontal)</span>
<span class="t" style="left:302.6px;top:206.00px;font-size:9.55px;color:#222;font-weight:normal;">SeekBar</span>
<span class="t" style="left:302.6px;top:218.00px;font-size:9.55px;color:#222;font-weight:normal;">SeekBar (Discrete)</span>
<span class="t" style="left:302.6px;top:230.00px;font-size:9.55px;color:#222;font-weight:normal;">QuickContactBadge</span>
<span class="t" style="left:302.6px;top:243.00px;font-size:9.55px;color:#222;font-weight:normal;">RatingBar</span>
<span class="t" style="left:302.6px;top:255.00px;font-size:9.55px;color:#222;font-weight:normal;">Switch</span>
<span class="t" style="left:302.6px;top:268.00px;font-size:9.55px;color:#222;font-weight:normal;">Space</span>
<svg class="a" style="left:290px;top:105.9px;" width="10" height="10" viewBox="0 0 10 10"><rect x="0" y="0" width="9.5" height="9" rx="1" fill="#cfcfcf"/><text x="4.75" y="6.6" font-size="5.2" font-family="Liberation Sans" font-weight="bold" text-anchor="middle" fill="#333">OK</text></svg>
<svg class="a" style="left:290px;top:118.36000000000001px;" width="10" height="10" viewBox="0 0 10 10"><rect x="0" y="0" width="9.5" height="9.5" rx="0.8" fill="#e91e63"/><path d="M7.8 1.5V8H3.5z" fill="#f9c4d6"/></svg>
<svg class="a" style="left:290px;top:130.82px;" width="10" height="10" viewBox="0 0 10 10"><rect x="0" y="0" width="9.5" height="9.5" rx="0.8" fill="#bdbdbd"/><path d="M2.2 4.8l1.8 1.8 3.5-3.6" stroke="#fff" stroke-width="1.1" fill="none"/></svg>
<svg class="a" style="left:290px;top:143.28px;" width="10" height="10" viewBox="0 0 10 10"><circle cx="4.75" cy="4.75" r="4.1" fill="none" stroke="#e91e63" stroke-width="1.1"/><circle cx="4.75" cy="4.75" r="2.1" fill="#e91e63"/></svg>
<svg class="a" style="left:290px;top:155.74px;" width="10" height="10" viewBox="0 0 10 10"><text x="0" y="4.3" font-size="4.6" font-family="Liberation Sans" fill="#555">A</text><path d="M3 6.2l2 2 4-3.5" stroke="#e91e63" stroke-width="1.4" fill="none"/></svg>
<svg class="a" style="left:290px;top:168.20000000000002px;" width="10" height="10" viewBox="0 0 10 10"><rect x="0" y="4" width="9.5" height="1.3" fill="#e91e63"/><rect x="0" y="7.2" width="9.5" height="1.3" fill="#e91e63"/><rect x="0" y="1.3" width="7" height="1" fill="#777"/><path d="M7.5 2.3L9.5 0.3v2z" fill="#777"/></svg>
<svg class="a" style="left:290px;top:180.66000000000003px;" width="10" height="10" viewBox="0 0 10 10"><path d="M3.45 8.32A3.8 3.8 0 1 1 8.04 6.65" fill="none" stroke="#e91e63" stroke-width="1.8"/></svg>
<svg class="a" style="left:290px;top:193.12px;" width="10" height="10" viewBox="0 0 10 10"><rect x="0" y="3.5" width="6.5" height="2" fill="#e91e63"/><rect x="6.5" y="3.5" width="3" height="2" fill="#f7b7cc"/></svg>
<svg class="a" style="left:290px;top:205.58px;" width="10" height="10" viewBox="0 0 10 10"><rect x="0" y="4" width="9.5" height="1.1" fill="#bbb"/><rect x="0" y="4" width="4.5" height="1.1" fill="#e91e63"/><circle cx="4.5" cy="4.5" r="1.8" fill="#e91e63"/></svg>
<svg class="a" style="left:290px;top:218.04000000000002px;" width="10" height="10" viewBox="0 0 10 10"><rect x="0" y="7.5" width="9.5" height="1.1" fill="#bbb"/><rect x="0" y="7.5" width="4.5" height="1.1" fill="#e91e63"/><path d="M4.5 6.5L2.6 3.6A2 2 0 1 1 6.4 3.6z" fill="#e91e63"/></svg>
<svg class="a" style="left:290px;top:230.5px;" width="10" height="10" viewBox="0 0 10 10"><rect x="0" y="0" width="9.5" height="9.5" rx="1" fill="#e91e63"/><circle cx="4.75" cy="3.5" r="1.6" fill="#fff"/><path d="M1.8 7.8a2.95 2.3 0 0 1 5.9 0z" fill="#fff"/></svg>
<svg class="a" style="left:290px;top:242.96px;" width="10" height="10" viewBox="0 0 10 10"><path d="M4.75 0.5l1.2 2.8 3 0.2-2.3 2 0.8 3-2.7-1.7-2.7 1.7 0.8-3-2.3-2 3-0.2z" fill="#bdbdbd"/></svg>
<svg class="a" style="left:290px;top:255.42000000000002px;" width="10" height="10" viewBox="0 0 10 10"><rect x="0" y="4" width="7" height="1.5" rx="0.7" fill="#f7b7cc"/><circle cx="6.8" cy="4.75" r="2.2" fill="#e91e63"/></svg>
<svg class="a" style="left:290px;top:267.88px;" width="10" height="10" viewBox="0 0 10 10"><rect x="0" y="0" width="1" height="10" fill="#444"/><rect x="8.5" y="0" width="1" height="10" fill="#444"/><path d="M1 5h7.5" stroke="#e91e63" stroke-width="0.8" stroke-dasharray="1 0.6"/></svg>
<div class="a" style="left:287px;top:282.5px;width:150px;height:1px;background:#d6d6d6;"></div>
<span class="t" style="left:302.7px;top:289.00px;font-size:9.55px;color:#222;font-weight:normal;">TextView</span>
<span class="t" style="left:302.7px;top:301.00px;font-size:9.55px;color:#222;font-weight:normal;">Plain Text</span>
<span class="t" style="left:302.7px;top:314.00px;font-size:9.55px;color:#222;font-weight:normal;">Password</span>
<span class="t" style="left:302.7px;top:326.00px;font-size:9.55px;color:#222;font-weight:normal;">Password (Numeric)</span>
<span class="t" style="left:302.7px;top:339.00px;font-size:9.55px;color:#222;font-weight:normal;">E-mail</span>
<span class="t" style="left:302.7px;top:351.00px;font-size:9.55px;color:#222;font-weight:normal;">Phone</span>
<span class="t" style="left:302.7px;top:364.00px;font-size:9.55px;color:#222;font-weight:normal;">Postal Address</span>
<span class="t" style="left:302.7px;top:376.00px;font-size:9.55px;color:#222;font-weight:normal;">Multiline Text</span>
<svg class="a" style="left:289.3px;top:288.2px;" width="11" height="11" viewBox="0 0 11 11"><text x="0.8" y="7.2" font-size="6" font-family="Liberation Sans" fill="#555">Ab</text></svg>
<svg class="a" style="left:289.3px;top:300.7px;" width="11" height="11" viewBox="0 0 11 11"><rect x="0.5" y="0.5" width="10" height="10" rx="1" fill="#fff" stroke="#d8d8d8" stroke-width="0.8"/><text x="5.5" y="7" font-size="5" font-family="Liberation Sans" fill="#777" text-anchor="middle">abc</text></svg>
<svg class="a" style="left:289.3px;top:313.2px;" width="11" height="11" viewBox="0 0 11 11"><rect x="0.5" y="0.5" width="10" height="10" rx="1" fill="#fff" stroke="#d8d8d8" stroke-width="0.8"/><rect x="3" y="5" width="5" height="4" fill="#555"/><path d="M3.8 5V3.8a1.7 1.7 0 0 1 3.4 0V5" fill="none" stroke="#555" stroke-width="0.9"/></svg>
<svg class="a" style="left:289.3px;top:325.7px;" width="11" height="11" viewBox="0 0 11 11"><rect x="0.5" y="0.5" width="10" height="10" rx="1" fill="#fff" stroke="#d8d8d8" stroke-width="0.8"/><text x="1" y="5" font-size="4" font-family="Liberation Sans" fill="#555">#</text><rect x="4.5" y="5.5" width="4.5" height="3.6" fill="#555"/><path d="M5.2 5.5V4.5a1.55 1.55 0 0 1 3.1 0v1" fill="none" stroke="#555" stroke-width="0.9"/></svg>
<svg class="a" style="left:289.3px;top:338.2px;" width="11" height="11" viewBox="0 0 11 11"><rect x="0.5" y="0.5" width="10" height="10" rx="1" fill="#fff" stroke="#d8d8d8" stroke-width="0.8"/><text x="5.5" y="8" font-size="7.5" font-family="Liberation Sans" fill="#666" text-anchor="middle">@</text></svg>
<svg class="a" style="left:289.3px;top:350.7px;" width="11" height="11" viewBox="0 0 11 11"><rect x="0.5" y="0.5" width="10" height="10" rx="1" fill="#fff" stroke="#d8d8d8" stroke-width="0.8"/><text x="5.5" y="7.8" font-size="6.5" font-family="Liberation Sans" fill="#666" text-anchor="middle">#</text></svg>
<svg class="a" style="left:289.3px;top:363.2px;" width="11" height="11" viewBox="0 0 11 11"><rect x="0.5" y="0.5" width="10" height="10" rx="1" fill="#fff" stroke="#d8d8d8" stroke-width="0.8"/><path d="M5.5 2L1.8 5.5h1.2V9h5V5.5h1.2z" fill="#555"/></svg>
<svg class="a" style="left:289.3px;top:375.7px;" width="11" height="11" viewBox="0 0 11 11"><rect x="0.5" y="0.5" width="10" height="10" rx="1" fill="#fff" stroke="#d8d8d8" stroke-width="0.8"/><rect x="2.5" y="2.5" width="6" height="1" fill="#555"/><rect x="2.5" y="5" width="4" height="1" fill="#555"/><rect x="2.5" y="7.5" width="6" height="1" fill="#555"/></svg>
<svg class="a" style="left:289.3px;top:386.5px;" width="11" height="4" viewBox="0 0 11 4"><rect x="0.5" y="0.5" width="10" height="10" rx="1" fill="#fff" stroke="#d8d8d8" stroke-width="0.8"/></svg>
<div class="a" style="left:216px;top:390px;width:221px;height:6px;background:#e8e8e8;border-top:1px solid #cfcfcf;border-bottom:1px solid #cfcfcf;border-left:1px solid #d6d6d6"></div>
<svg class="a" style="left:322px;top:392px;" width="10" height="2" viewBox="0 0 10 2"><path d="M0 2l1-2M2 2l1-2M4 2l1-2M6 2l1-2M8 2l1-2" stroke="#b0b0b0" stroke-width="0.5"/></svg>
<div class="a" style="left:216px;top:396px;width:221px;height:17.5px;background:#e9e9e9;border-bottom:1px solid #cdcdcd;border-left:1px solid #d6d6d6"></div>
<span class="t" style="left:220px;top:402.00px;font-size:8.0px;color:#333;font-weight:normal;">Component Tree</span>
<svg class="a" style="left:404px;top:400px;" width="10" height="9" viewBox="0 0 10 9"><circle cx="4" cy="4.5" r="2.3" fill="none" stroke="#555" stroke-width="1.5"/><path d="M4 0.5v1.5M4 7v1.5M0 4.5h1.5M6.5 4.5h1.5M1.2 1.7l1 1M5.8 6.3l1 1M6.8 1.7l-1 1M2.2 6.3l-1 1" stroke="#555" stroke-width="1"/><path d="M8.2 4.2h1.8L9.1 5.2z" fill="#555"/></svg>
<svg class="a" style="left:424px;top:400px;" width="10" height="10" viewBox="0 0 10 10"><rect x="0.5" y="0.5" width="1.3" height="8.5" fill="#666"/><path d="M3.5 2.8l2-1.5v3z" fill="#555"/><path d="M5 2.8h4" stroke="#555" stroke-width="0.8"/></svg>
<div class="a" style="left:216px;top:413.5px;width:221px;height:287px;background:#fff;border-left:1px solid #d6d6d6"></div>
<div class="a" style="left:217px;top:413px;width:220px;height:287px;overflow:hidden">
<svg class="a" style="left:5.5px;top:4.100000000000023px;" width="7" height="6" viewBox="0 0 7 6"><path d="M0.3 0.5h6L3.3 5.2z" fill="#a8a8a8"/></svg>
<svg class="a" style="left:19px;top:2.3000000000000114px;" width="10" height="9.5" viewBox="0 0 10 9.5"><rect x="0" y="0" width="2" height="9.5" fill="#444"/><rect x="3" y="0" width="2" height="9.5" fill="#444"/><rect x="6" y="0" width="2" height="9.5" fill="#444"/><rect x="9" y="0" width="1" height="9.5" fill="#444"/></svg>
<span class="t" style="left:31.5px;top:3.00px;font-size:9.3px;color:#222;font-weight:normal;">LinearLayout <span style="color:#999">(horizontal)</span></span>
<svg class="a" style="left:19.5px;top:17.260000000000048px;" width="7" height="6" viewBox="0 0 7 6"><path d="M0.3 0.5h6L3.3 5.2z" fill="#a8a8a8"/></svg>
<svg class="a" style="left:34px;top:15.960000000000036px;" width="9" height="9" viewBox="0 0 9 9"><path d="M0.3 3.2L3.2 0.3M0.3 6.2L6.2 0.3M0.3 9L9 0.3M3 9L9 3M6 9L9 6" stroke="#6a6a6a" stroke-width="1"/></svg>
<span class="t" style="left:45px;top:16.00px;font-size:9.3px;color:#222;font-weight:normal;">ConstraintLayout</span>
<svg class="a" style="left:48px;top:29.120000000000005px;" width="9" height="9" viewBox="0 0 9 9"><path d="M0.3 3.2L3.2 0.3M0.3 6.2L6.2 0.3M0.3 9L9 0.3M3 9L9 3M6 9L9 6" stroke="#6a6a6a" stroke-width="1"/></svg>
<span class="t" style="left:58.80000000000001px;top:29.00px;font-size:9.4px;color:#111;font-weight:bold;">artwork_profile_container_0_guideli</span>
<svg class="a" style="left:48px;top:42.28000000000003px;" width="9" height="9" viewBox="0 0 9 9"><path d="M0.3 3.2L3.2 0.3M0.3 6.2L6.2 0.3M0.3 9L9 0.3M3 9L9 3M6 9L9 6" stroke="#6a6a6a" stroke-width="1"/></svg>
<span class="t" style="left:58.80000000000001px;top:42.00px;font-size:9.4px;color:#111;font-weight:bold;">artwork_profile_container_0_guideli</span>
<svg class="a" style="left:48px;top:55.44px;" width="9" height="9" viewBox="0 0 9 9"><path d="M0.3 3.2L3.2 0.3M0.3 6.2L6.2 0.3M0.3 9L9 0.3M3 9L9 3M6 9L9 6" stroke="#6a6a6a" stroke-width="1"/></svg>
<span class="t" style="left:58.80000000000001px;top:55.00px;font-size:9.4px;color:#111;font-weight:bold;">artwork_profile_container_0_guideli</span>
<svg class="a" style="left:48px;top:68.60000000000002px;" width="9" height="9" viewBox="0 0 9 9"><path d="M0.3 3.2L3.2 0.3M0.3 6.2L6.2 0.3M0.3 9L9 0.3M3 9L9 3M6 9L9 6" stroke="#6a6a6a" stroke-width="1"/></svg>
<span class="t" style="left:58.80000000000001px;top:68.00px;font-size:9.4px;color:#111;font-weight:bold;">artwork_profile_container_0_guideli</span>
<svg class="a" style="left:33.5px;top:83.06px;" width="7" height="6" viewBox="0 0 7 6"><path d="M0.3 0.5h6L3.3 5.2z" fill="#a8a8a8"/></svg>
<svg class="a" style="left:48px;top:81.75999999999999px;" width="9" height="9" viewBox="0 0 9 9"><path d="M0.3 3.2L3.2 0.3M0.3 6.2L6.2 0.3M0.3 9L9 0.3M3 9L9 3M6 9L9 6" stroke="#6a6a6a" stroke-width="1"/></svg>
<span class="t" style="left:58.80000000000001px;top:81.00px;font-size:9.4px;color:#111;font-weight:bold;">artwork_profile_container_0_93beb</span>
<svg class="a" style="left:62px;top:94.92000000000007px;" width="9" height="9" viewBox="0 0 9 9"><path d="M0.3 3.2L3.2 0.3M0.3 6.2L6.2 0.3M0.3 9L9 0.3M3 9L9 3M6 9L9 6" stroke="#6a6a6a" stroke-width="1"/></svg>
<span class="t" style="left:72.80000000000001px;top:94.00px;font-size:9.4px;color:#111;font-weight:bold;">artwork_profile_container_0_row</span>
<svg class="a" style="left:62px;top:108.08000000000004px;" width="9" height="9" viewBox="0 0 9 9"><path d="M0.3 3.2L3.2 0.3M0.3 6.2L6.2 0.3M0.3 9L9 0.3M3 9L9 3M6 9L9 6" stroke="#6a6a6a" stroke-width="1"/></svg>
<span class="t" style="left:72.80000000000001px;top:108.00px;font-size:9.4px;color:#111;font-weight:bold;">artwork_profile_container_0_row</span>
<svg class="a" style="left:62px;top:121.24000000000001px;" width="9" height="9" viewBox="0 0 9 9"><path d="M0.3 3.2L3.2 0.3M0.3 6.2L6.2 0.3M0.3 9L9 0.3M3 9L9 3M6 9L9 6" stroke="#6a6a6a" stroke-width="1"/></svg>
<span class="t" style="left:72.80000000000001px;top:121.00px;font-size:9.4px;color:#111;font-weight:bold;">artwork_profile_container_0_row</span>
<svg class="a" style="left:62px;top:134.39999999999998px;" width="9" height="9" viewBox="0 0 9 9"><path d="M0.3 3.2L3.2 0.3M0.3 6.2L6.2 0.3M0.3 9L9 0.3M3 9L9 3M6 9L9 6" stroke="#6a6a6a" stroke-width="1"/></svg>
<span class="t" style="left:72.80000000000001px;top:134.00px;font-size:9.4px;color:#111;font-weight:bold;">artwork_profile_container_0_row</span>
<svg class="a" style="left:47.5px;top:148.8599999999999px;" width="7" height="6" viewBox="0 0 7 6"><path d="M0.3 0.5h6L3.3 5.2z" fill="#a8a8a8"/></svg>
<svg class="a" style="left:62px;top:147.55999999999995px;" width="9" height="9" viewBox="0 0 9 9"><path d="M0.3 3.2L3.2 0.3M0.3 6.2L6.2 0.3M0.3 9L9 0.3M3 9L9 3M6 9L9 6" stroke="#6a6a6a" stroke-width="1"/></svg>
<span class="t" style="left:72.80000000000001px;top:147.00px;font-size:9.4px;color:#111;font-weight:bold;">artwork_profile_container_0_row</span>
<svg class="a" style="left:76px;top:160.72000000000003px;" width="9" height="9" viewBox="0 0 9 9"><path d="M0.3 3.2L3.2 0.3M0.3 6.2L6.2 0.3M0.3 9L9 0.3M3 9L9 3M6 9L9 6" stroke="#6a6a6a" stroke-width="1"/></svg>
<span class="t" style="left:86.80000000000001px;top:160.00px;font-size:9.4px;color:#111;font-weight:bold;">artwork_profile_container_0_row</span>
<svg class="a" style="left:76px;top:173.88px;" width="9" height="9" viewBox="0 0 9 9"><path d="M0.3 3.2L3.2 0.3M0.3 6.2L6.2 0.3M0.3 9L9 0.3M3 9L9 3M6 9L9 6" stroke="#6a6a6a" stroke-width="1"/></svg>
<span class="t" style="left:86.80000000000001px;top:173.00px;font-size:9.4px;color:#111;font-weight:bold;">artwork_profile_container_0_row</span>
<svg class="a" style="left:76px;top:187.03999999999996px;" width="9" height="9" viewBox="0 0 9 9"><path d="M0.3 3.2L3.2 0.3M0.3 6.2L6.2 0.3M0.3 9L9 0.3M3 9L9 3M6 9L9 6" stroke="#6a6a6a" stroke-width="1"/></svg>
<span class="t" style="left:86.80000000000001px;top:187.00px;font-size:9.4px;color:#111;font-weight:bold;">artwork_profile_container_0_row</span>
<svg class="a" style="left:76px;top:200.20000000000005px;" width="9" height="9" viewBox="0 0 9 9"><path d="M0.3 3.2L3.2 0.3M0.3 6.2L6.2 0.3M0.3 9L9 0.3M3 9L9 3M6 9L9 6" stroke="#6a6a6a" stroke-width="1"/></svg>
<span class="t" style="left:86.80000000000001px;top:200.00px;font-size:9.4px;color:#111;font-weight:bold;">artwork_profile_container_0_row</span>
<svg class="a" style="left:76px;top:213.36px;" width="9" height="9" viewBox="0 0 9 9"><path d="M0.3 3.2L3.2 0.3M0.3 6.2L6.2 0.3M0.3 9L9 0.3M3 9L9 3M6 9L9 6" stroke="#6a6a6a" stroke-width="1"/></svg>
<span class="t" style="left:86.80000000000001px;top:213.00px;font-size:9.4px;color:#111;font-weight:bold;">artwork_profile_container_0_row</span>
<svg class="a" style="left:76px;top:226.51999999999998px;" width="9" height="9" viewBox="0 0 9 9"><path d="M0.3 3.2L3.2 0.3M0.3 6.2L6.2 0.3M0.3 9L9 0.3M3 9L9 3M6 9L9 6" stroke="#6a6a6a" stroke-width="1"/></svg>
<span class="t" style="left:86.80000000000001px;top:226.00px;font-size:9.4px;color:#111;font-weight:bold;">artwork_profile_container_0_row</span>
<svg class="a" style="left:76px;top:239.68000000000006px;" width="9" height="9" viewBox="0 0 9 9"><path d="M0.3 3.2L3.2 0.3M0.3 6.2L6.2 0.3M0.3 9L9 0.3M3 9L9 3M6 9L9 6" stroke="#6a6a6a" stroke-width="1"/></svg>
<span class="t" style="left:86.80000000000001px;top:239.00px;font-size:9.4px;color:#111;font-weight:bold;">artwork_profile_container_0_row</span>
<svg class="a" style="left:76px;top:252.84000000000003px;" width="9" height="9" viewBox="0 0 9 9"><path d="M0.3 3.2L3.2 0.3M0.3 6.2L6.2 0.3M0.3 9L9 0.3M3 9L9 3M6 9L9 6" stroke="#6a6a6a" stroke-width="1"/></svg>
<span class="t" style="left:86.80000000000001px;top:252.00px;font-size:9.4px;color:#111;font-weight:bold;">artwork_profile_container_0_row</span>
<svg class="a" style="left:76px;top:266.0px;" width="9" height="9" viewBox="0 0 9 9"><path d="M0.3 3.2L3.2 0.3M0.3 6.2L6.2 0.3M0.3 9L9 0.3M3 9L9 3M6 9L9 6" stroke="#6a6a6a" stroke-width="1"/></svg>
<span class="t" style="left:86.80000000000001px;top:266.00px;font-size:9.4px;color:#111;font-weight:bold;">artwork_profile_container_0_row</span>
<svg class="a" style="left:76px;top:279.6600000000001px;" width="10" height="8" viewBox="0 0 10 8"><text x="0" y="7" font-size="6.5" font-family="Liberation Sans" fill="#666">Ab</text></svg>
<span class="t" style="left:86.80000000000001px;top:279.00px;font-size:9.4px;color:#111;font-weight:bold;">artwork_profile_container_0_row</span>
</div>
<div class="a" style="left:216px;top:700px;width:1063px;height:20px;background:#e8e8e8;border-top:1px solid #c4c4c4"></div>
<div class="a" style="left:216px;top:701px;width:1063px;height:2px;background:#f8f8f8;"></div>
<div class="a" style="left:216px;top:703px;width:7px;height:17px;background:#dcdcdc;border-right:1px solid #cccccc"></div>
<div class="a" style="left:223px;top:702px;width:35.3px;height:18px;background:#f7f7f7;"></div>
<div class="a" style="left:258.3px;top:703px;width:35.5px;height:17px;background:#cfcfcf;"></div>
<span class="t" style="left:229.7px;top:706.00px;font-size:8.3px;color:#444;font-weight:normal;">Design</span>
<span class="t" style="left:270px;top:706.00px;font-size:8.3px;color:#555;font-weight:normal;">Text</span>
<div class="a" style="left:439px;top:85px;width:840px;height:18.5px;background:#e9e9e9;border-bottom:1px solid #cbcbcb"></div>
<div class="a" style="left:439px;top:104px;width:840px;height:20.5px;background:#e8e8e8;border-bottom:1px solid #c6c6c6"></div>
<div class="a" style="left:439px;top:125px;width:840px;height:575px;background:#efefef;"></div>
<svg class="a" style="left:441px;top:88.7px;" width="11.5" height="11.5" viewBox="0 0 11.5 11.5"><path d="M5.75 5.5L0.3 8.3 5.75 11.2 11.2 8.3z" fill="#64b5f6"/><path d="M5.75 0.3L0.3 3.4 5.75 6.5 11.2 3.4z" fill="#2196f3"/><path d="M0.8 8.3L5.75 10.8 10.7 8.3" fill="none" stroke="#e9e9e9" stroke-width="0.6"/></svg>
<svg class="a" style="left:457.5px;top:94px;" width="5" height="3" viewBox="0 0 5 3"><path d="M0 0h5L2.5 3z" fill="#444"/></svg>
<div class="a" style="left:469px;top:87px;width:1px;height:16px;background:repeating-linear-gradient(#9a9a9a 0 1px,transparent 1px 3px)"></div>
<svg class="a" style="left:473px;top:88px;" width="12" height="12" viewBox="0 0 12 12"><rect x="3.5" y="1.5" width="5" height="9" rx="0.8" transform="rotate(-45 6 6)" fill="none" stroke="#555" stroke-width="1"/><path d="M7.2 0.6A5.6 5.6 0 0 1 11.4 4.8M4.8 11.4A5.6 5.6 0 0 1 0.6 7.2" fill="none" stroke="#555" stroke-width="1"/></svg>
<svg class="a" style="left:490px;top:94px;" width="5" height="3" viewBox="0 0 5 3"><path d="M0 0h5L2.5 3z" fill="#444"/></svg>
<div class="a" style="left:501.5px;top:87px;width:1px;height:16px;background:repeating-linear-gradient(#9a9a9a 0 1px,transparent 1px 3px)"></div>
<svg class="a" style="left:508.8px;top:88.9px;" width="8" height="11" viewBox="0 0 8 11"><rect x="0.6" y="0.6" width="6.6" height="9.8" rx="0.8" fill="none" stroke="#555" stroke-width="1.2"/></svg>
<span class="t" style="left:520.8px;top:90.00px;font-size:9.5px;color:#333;font-weight:normal;">Nexus 4</span>
<svg class="a" style="left:563px;top:94.5px;" width="5" height="3" viewBox="0 0 5 3"><path d="M0 0h5L2.5 3z" fill="#444"/></svg>
<svg class="a" style="left:575px;top:91.5px;" width="8" height="5.5" viewBox="0 0 8 5.5"><path d="M0.3 5.2a3.7 3.3 0 0 1 7.4 0z" fill="#8bc34a"/><rect x="0.3" y="2.5" width="7.4" height="3" fill="#8bc34a"/><path d="M1.5 0.5l1 1.5M6.5 0.5l-1 1.5" stroke="#8bc34a" stroke-width="0.7"/><circle cx="2.7" cy="3.2" r="0.5" fill="#e9e9e9"/><circle cx="5.3" cy="3.2" r="0.5" fill="#e9e9e9"/></svg>
<span class="t" style="left:587px;top:90.00px;font-size:9.5px;color:#333;font-weight:normal;">27</span>
<svg class="a" style="left:602.5px;top:94.5px;" width="5" height="3" viewBox="0 0 5 3"><path d="M0 0h5L2.5 3z" fill="#444"/></svg>
<svg class="a" style="left:614px;top:89px;" width="11" height="11" viewBox="0 0 11 11"><circle cx="5.5" cy="5.5" r="5" fill="none" stroke="#555" stroke-width="0.9"/><circle cx="5.5" cy="5.5" r="3.2" fill="none" stroke="#555" stroke-width="1"/><path d="M5.5 2.3a3.2 3.2 0 0 0 0 6.4z" fill="#555"/></svg>
<span class="t" style="left:626.9px;top:91.00px;font-size:9.2px;color:#333;font-weight:normal;">AppTheme</span>
<div class="a" style="left:678.5px;top:87px;width:1px;height:16px;background:repeating-linear-gradient(#9a9a9a 0 1px,transparent 1px 3px)"></div>
<svg class="a" style="left:683px;top:89.5px;" width="10" height="10" viewBox="0 0 10 10"><circle cx="5" cy="5" r="4.8" fill="#595959"/><path d="M1.5 3.2c1.2 0.2 1.6 1 2.8 1.2 0.6 0.6 0 1.6 0.8 2.2 0.3 1 -0.4 1.8 0 2.6M6 0.6c-0.2 1 0.6 1.4 1.4 1.6 0.8 0.5 0.4 1.4 1.3 1.5M6.3 5.5c0.8 0 1.5 0.6 1.6 1.6 0 0.8-0.6 1.5-0.9 2" fill="none" stroke="#e9e9e9" stroke-width="1"/></svg>
<span class="t" style="left:696.9px;top:91.00px;font-size:9.2px;color:#333;font-weight:normal;">Language</span>
<svg class="a" style="left:743.5px;top:94.5px;" width="5" height="3" viewBox="0 0 5 3"><path d="M0 0h5L2.5 3z" fill="#444"/></svg>
<svg class="a" style="left:443px;top:109px;" width="10.5" height="10" viewBox="0 0 10.5 10"><rect x="0" y="0" width="10.5" height="2.4" fill="#4a4a4a"/><rect x="0" y="3.6" width="10.5" height="2.4" fill="#4a4a4a"/><rect x="0" y="7.2" width="10.5" height="2.4" fill="#4a4a4a"/></svg>
<div class="a" style="left:459.5px;top:106.5px;width:1px;height:16.0px;background:repeating-linear-gradient(#9a9a9a 0 1px,transparent 1px 3px)"></div>
<svg class="a" style="left:464.5px;top:111px;" width="10" height="5" viewBox="0 0 10 5"><path d="M1 2.5h8" stroke="#b8b8b8" stroke-width="1"/><path d="M0 2.5L2.5 0v5zM10 2.5L7.5 0v5z" fill="#b8b8b8"/></svg>
<svg class="a" style="left:484px;top:109px;" width="5" height="10" viewBox="0 0 5 10"><path d="M2.5 1v8" stroke="#b8b8b8" stroke-width="1"/><path d="M2.5 0L0 2.5h5zM2.5 10L0 7.5h5z" fill="#b8b8b8"/></svg>
<svg class="a" style="left:1176.3px;top:108px;" width="11" height="11" viewBox="0 0 11 11"><circle cx="5.5" cy="5.5" r="4.9" fill="none" stroke="#555" stroke-width="1"/><path d="M2.8 5.5h5.4" stroke="#555" stroke-width="1.3"/></svg>
<span class="t" style="left:1191px;top:110.00px;font-size:9.0px;color:#333;font-weight:normal;">54%</span>
<svg class="a" style="left:1214.5px;top:108px;" width="11" height="11" viewBox="0 0 11 11"><circle cx="5.5" cy="5.5" r="4.9" fill="none" stroke="#555" stroke-width="1"/><path d="M2.8 5.5h5.4M5.5 2.8v5.4" stroke="#555" stroke-width="1.3"/></svg>
<svg class="a" style="left:1232px;top:109px;" width="11" height="10" viewBox="0 0 11 10"><rect x="0.6" y="0.6" width="9.8" height="8.6" fill="none" stroke="#555" stroke-width="1.1"/><path d="M2.5 2.5l2 2M2.5 2.5h1.6M2.5 2.5v1.6M8.5 7.3l-2-2M8.5 7.3H6.9M8.5 7.3V5.7" stroke="#555" stroke-width="0.7"/></svg>
<svg class="a" style="left:1250px;top:108.5px;" width="10" height="11" viewBox="0 0 10 11"><path d="M2.5 3v4.5L1.2 6.2 0.3 7.2 3 10.5h5.5l1-2.5V2.8a0.8 0.8 0 0 0-1.6 0V5V1.5a0.8 0.8 0 0 0-1.6 0V5V1a0.8 0.8 0 0 0-1.6 0V5V2a0.8 0.8 0 0 0-1.6 0z" fill="#555"/></svg>
<div class="a" style="left:1266px;top:106.5px;width:1px;height:16.0px;background:repeating-linear-gradient(#9a9a9a 0 1px,transparent 1px 3px)"></div>
<svg class="a" style="left:1271px;top:108.5px;" width="11" height="11" viewBox="0 0 11 11"><circle cx="5.5" cy="5.5" r="5.2" fill="#666"/><rect x="4.8" y="2.2" width="1.4" height="4.3" fill="#e8e8e8"/><rect x="4.8" y="7.5" width="1.4" height="1.4" fill="#e8e8e8"/></svg>
<div class="a" style="left:569.5px;top:172.5px;width:290px;height:483px;background:#fdfdfd;"></div>
<div class="a" style="left:570.5px;top:173px;width:288.5px;height:19px;background:#2b3a96;"></div>
<div class="a" style="left:570.5px;top:192px;width:288.5px;height:42px;background:#3949ab;"></div>
<svg class="a" style="left:801.5px;top:176.5px;" width="16" height="12" viewBox="0 0 16 12"><path d="M0.2 2Q7.6-2.6 15 2L7.6 11.8z" fill="#fff"/></svg>
<div class="a" style="left:819.1px;top:177.8px;width:8.7px;height:11.6px;background:#fff;border-radius:0.8px"></div>
<div class="a" style="left:821.4px;top:176.7px;width:4px;height:1.5px;background:#fff;"></div>
<span class="t" style="left:832.2px;top:180.00px;font-size:11.4px;color:#fff;font-weight:bold;letter-spacing:0px">8:00</span>
<span class="t" style="left:582.8px;top:207.00px;font-size:14.6px;color:#fff;font-weight:normal;">App</span>
<div class="a" style="left:570.5px;top:234px;width:288.5px;height:143px;background:#fff;"></div>
<div class="a" style="left:570.5px;top:377px;width:145px;height:67.5px;background:#43b7fc;"></div>
<div class="a" style="left:715.5px;top:377px;width:143.5px;height:67.5px;background:#fe72e0;"></div>
<svg class="a" style="left:622px;top:234px;" width="184.7" height="164" viewBox="0 0 184.7 164"><rect width="184.7" height="164" fill="#259d8c"/><path d="M39.1 96.6H148.1V60L184.7 96.6V164H106.5z" fill="#000" opacity="0.05"/><rect x="2.3" y="0" width="1.4" height="164" fill="#fff" opacity="0.38"/><rect x="28.0" y="0" width="1.4" height="164" fill="#fff" opacity="0.38"/><rect x="53.7" y="0" width="1.4" height="164" fill="#fff" opacity="0.38"/><rect x="79.4" y="0" width="1.4" height="164" fill="#fff" opacity="0.38"/><rect x="105.1" y="0" width="1.4" height="164" fill="#fff" opacity="0.38"/><rect x="130.8" y="0" width="1.4" height="164" fill="#fff" opacity="0.38"/><rect x="156.5" y="0" width="1.4" height="164" fill="#fff" opacity="0.38"/><rect x="182.2" y="0" width="1.4" height="164" fill="#fff" opacity="0.38"/><rect x="0" y="7.6" width="184.7" height="1.4" fill="#fff" opacity="0.38"/><rect x="0" y="33.3" width="184.7" height="1.4" fill="#fff" opacity="0.38"/><rect x="0" y="59.0" width="184.7" height="1.4" fill="#fff" opacity="0.38"/><rect x="0" y="84.7" width="184.7" height="1.4" fill="#fff" opacity="0.38"/><rect x="0" y="110.4" width="184.7" height="1.4" fill="#fff" opacity="0.38"/><rect x="0" y="136.1" width="184.7" height="1.4" fill="#fff" opacity="0.38"/><rect x="0" y="161.8" width="184.7" height="1.4" fill="#fff" opacity="0.38"/><path d="M39.1 96.6A54.5 56.3 0 0 1 148.1 96.6z" fill="#fff"/><path d="M48.8 34L62 49.3M135 34L123.8 49.3" stroke="#fff" stroke-width="5.5" stroke-linecap="round"/><circle cx="69.25" cy="74" r="5.3" fill="#259d8c"/><circle cx="115.2" cy="74" r="5.3" fill="#259d8c"/><text x="67" y="108.4" font-size="6.4" font-family="Liberation Sans" fill="#5ec4f4">UI/UX Designer</text></svg>
<div class="a" style="left:589.9px;top:290.9px;width:73.2px;height:73.2px;border-radius:50%;background:#fff"></div>
<svg class="a" style="left:607px;top:306.7px;" width="40.3" height="40.1" viewBox="0 0 40.3 40.1"><rect width="40.3" height="40.1" fill="#259d8c"/><rect x="2.56" y="0" width="0.6" height="40" fill="#fff" opacity="0.16"/><rect x="0" y="2.56" width="40" height="0.6" fill="#fff" opacity="0.16"/><rect x="5.42" y="0" width="0.6" height="40" fill="#fff" opacity="0.32"/><rect x="0" y="5.42" width="40" height="0.6" fill="#fff" opacity="0.32"/><rect x="8.28" y="0" width="0.6" height="40" fill="#fff" opacity="0.16"/><rect x="0" y="8.28" width="40" height="0.6" fill="#fff" opacity="0.16"/><rect x="11.14" y="0" width="0.6" height="40" fill="#fff" opacity="0.32"/><rect x="0" y="11.14" width="40" height="0.6" fill="#fff" opacity="0.32"/><rect x="14.00" y="0" width="0.6" height="40" fill="#fff" opacity="0.16"/><rect x="0" y="14.00" width="40" height="0.6" fill="#fff" opacity="0.16"/><rect x="16.86" y="0" width="0.6" height="40" fill="#fff" opacity="0.32"/><rect x="0" y="16.86" width="40" height="0.6" fill="#fff" opacity="0.32"/><rect x="19.72" y="0" width="0.6" height="40" fill="#fff" opacity="0.16"/><rect x="0" y="19.72" width="40" height="0.6" fill="#fff" opacity="0.16"/><rect x="22.58" y="0" width="0.6" height="40" fill="#fff" opacity="0.32"/><rect x="0" y="22.58" width="40" height="0.6" fill="#fff" opacity="0.32"/><rect x="25.44" y="0" width="0.6" height="40" fill="#fff" opacity="0.16"/><rect x="0" y="25.44" width="40" height="0.6" fill="#fff" opacity="0.16"/><rect x="28.30" y="0" width="0.6" height="40" fill="#fff" opacity="0.32"/><rect x="0" y="28.30" width="40" height="0.6" fill="#fff" opacity="0.32"/><rect x="31.16" y="0" width="0.6" height="40" fill="#fff" opacity="0.16"/><rect x="0" y="31.16" width="40" height="0.6" fill="#fff" opacity="0.16"/><rect x="34.02" y="0" width="0.6" height="40" fill="#fff" opacity="0.32"/><rect x="0" y="34.02" width="40" height="0.6" fill="#fff" opacity="0.32"/><rect x="36.88" y="0" width="0.6" height="40" fill="#fff" opacity="0.16"/><rect x="0" y="36.88" width="40" height="0.6" fill="#fff" opacity="0.16"/><path d="M7.8 25.7A12.4 12.4 0 0 1 32.6 25.7z" fill="#fff"/><path d="M10.5 12l3.3 4.2M29.9 12l-3.3 4.2" stroke="#fff" stroke-width="1.9" stroke-linecap="round"/><circle cx="15" cy="20.7" r="1.2" fill="#259d8c"/><circle cx="25.5" cy="20.7" r="1.2" fill="#259d8c"/></svg>
<div class="a" style="left:691.5px;top:352.5px;width:48px;height:48px;border-radius:50%;background:#fff;box-shadow:0 0.6px 0.8px rgba(0,0,0,0.35)"></div>
<span class="t" style="left:632.8px;top:398.00px;font-size:17.5px;color:#fff;font-weight:normal;font-weight:300;letter-spacing:0.3px">12</span>
<span class="t" style="left:777px;top:398.00px;font-size:17.5px;color:#fff;font-weight:normal;letter-spacing:0.3px">32</span>
<span class="t" style="left:618.9px;top:418.00px;font-size:7.0px;color:#e8f6ff;font-weight:normal;">remaining tasks</span>
<span class="t" style="left:752.6px;top:418.00px;font-size:7.0px;color:#fff0fb;font-weight:normal;">completed tasks</span>
<div class="a" style="left:570.5px;top:444.5px;width:288.5px;height:174.5px;background:#fff;"></div>
<span class="t" style="left:587.2px;top:470.00px;font-size:7.1px;color:#6b7a8f;font-weight:bold;letter-spacing:0.35px">TODAY</span>
<div class="a" style="left:587.2px;top:491px;width:10.4px;height:8.2px;border-radius:50%;background:#d283f0"></div>
<div class="a" style="left:631.7px;top:491px;width:126px;height:10px;overflow:hidden"><span class="t" style="left:2px;top:2.2px;font-size:9.65px;color:#3d4350">Finish landing page concept</span></div>
<div class="a" style="left:782.2px;top:493px;width:11px;height:5.6px;background:#333d4a;"></div>
<div class="a" style="left:587.2px;top:521.6px;width:10.4px;height:8.2px;border-radius:50%;background:#52d68f"></div>
<div class="a" style="left:628.3px;top:521.6px;width:107px;height:10px;overflow:hidden"><span class="t" style="left:2px;top:2.2px;font-size:9.65px;color:#3d4350">Design app illustrations</span></div>
<div class="a" style="left:755.6px;top:523.6px;width:11px;height:5.6px;background:#333d4a;"></div>
<div class="a" style="left:587.2px;top:554px;width:10.4px;height:8.2px;border-radius:50%;background:#44b8fb"></div>
<div class="a" style="left:622.5px;top:554px;width:86.5px;height:10px;overflow:hidden"><span class="t" style="left:2px;top:2.2px;font-size:9.65px;color:#3d4350">Javascript training</span></div>
<div class="a" style="left:728px;top:556px;width:11px;height:5.6px;background:#333d4a;"></div>
<div class="a" style="left:587.2px;top:586px;width:10.4px;height:8.2px;border-radius:50%;background:#fdb56a"></div>
<div class="a" style="left:626.6px;top:586px;width:104.4px;height:10px;overflow:hidden"><span class="t" style="left:2px;top:2.2px;font-size:9.65px;color:#3d4350">Surprise Party for Matt</span></div>
<div class="a" style="left:752px;top:588px;width:11px;height:5.6px;background:#333d4a;"></div>
<div class="a" style="left:570.5px;top:619px;width:288.5px;height:36px;background:#000;"></div>
<svg class="a" style="left:609.4px;top:629.8px;" width="12.5" height="14" viewBox="0 0 12.5 14"><path d="M11.7 0.8V13.2L0.9 7z" fill="none" stroke="#ececec" stroke-width="1.6" stroke-linejoin="round"/></svg>
<svg class="a" style="left:707.6px;top:629.5px;" width="14" height="14" viewBox="0 0 14 14"><circle cx="6.9" cy="6.9" r="6.1" fill="none" stroke="#ececec" stroke-width="1.6"/></svg>
<svg class="a" style="left:808px;top:631px;" width="12" height="12" viewBox="0 0 12 12"><rect x="0.8" y="0.8" width="10" height="10" rx="0.8" fill="none" stroke="#ececec" stroke-width="1.6"/></svg>
<svg class="a" style="left:861px;top:658px;" width="12" height="12" viewBox="0 0 12 12"><path d="M11 1L1 11M11 6L6 11" stroke="#888" stroke-width="0.8"/></svg>
<svg class="a" style="left:866px;top:173px;overflow:hidden" width="288.5" height="482" viewBox="0 0 288.5 482"><rect width="288.5" height="482" fill="#22466b"/><rect x="3" y="61" width="281" height="163" fill="#27548a" opacity="0.55"/><polygon points="3.0,165.1 3.8,165.1 8.0,162.5 12.2,159.0 16.0,154.5 19.8,149.0 24.0,142.5 29.0,133.8 38.2,117.8 45.8,105.6 48.5,102.0 51.1,99.9 53.0,101.5 55.0,103.6 58.0,101.0 61.0,98.4 64.0,95.0 66.4,92.6 67.9,94.4 71.0,91.5 76.3,86.5 81.0,80.5 85.5,74.3 95.4,61.3 95.4,61.0 140.7,61.0 140.7,61.3 144.8,63.2 149.0,63.7 153.0,68.0 157.3,74.0 167.3,89.0 173.0,95.5 179.0,101.5 185.0,106.0 192.3,110.7 200.0,115.0 209.0,119.0 218.0,123.0 227.3,126.5 234.0,128.2 237.0,125.5 240.7,122.3 243.5,123.2 247.3,125.7 252.0,131.5 257.3,139.0 270.7,157.3 284.0,174.0 284.0,224.0 3.0,224.0" fill="#22466b"/><polyline points="3.8,165.1 8.0,162.5 12.2,159.0 16.0,154.5 19.8,149.0 24.0,142.5 29.0,133.8 38.2,117.8 45.8,105.6 48.5,102.0 51.1,99.9 53.0,101.5 55.0,103.6 58.0,101.0 61.0,98.4 64.0,95.0 66.4,92.6 67.9,94.4 71.0,91.5 76.3,86.5 81.0,80.5 85.5,74.3 95.4,61.3" fill="none" stroke="#c9d3dc" stroke-width="0.9"/><polyline points="140.7,61.3 144.8,63.2 149.0,63.7 153.0,68.0 157.3,74.0 167.3,89.0 173.0,95.5 179.0,101.5 185.0,106.0 192.3,110.7 200.0,115.0 209.0,119.0 218.0,123.0 227.3,126.5 234.0,128.2 237.0,125.5 240.7,122.3 243.5,123.2 247.3,125.7 252.0,131.5 257.3,139.0 270.7,157.3 284.0,174.0" fill="none" stroke="#c9d3dc" stroke-width="0.9"/><rect x="3.0" y="61.3" width="281.4" height="162.8" fill="none" stroke="#5088c2" stroke-width="0.9" opacity="1"/><line x1="0" y1="61.30000000000001" x2="288.5" y2="61.30000000000001" stroke="#4f85bd" stroke-width="0.8"/><polyline points="18.2,116.0 19.6,118.0 21.0,116.0 22.4,118.0 23.8,116.0 25.2,118.0 26.6,116.0 28.0,118.0 29.4,116.0 30.8,118.0 32.2,116.0 33.6,118.0 35.0,116.0 36.4,118.0 37.8,116.0 39.2,118.0 40.6,116.0 42.0,118.0 43.4,116.0 44.8,118.0 46.2,116.0 47.6,118.0 49.0,116.0 50.4,118.0 51.8,116.0 53.2,118.0 54.6,116.0 56.0,118.0 57.4,116.0 58.8,118.0 60.2,116.0 61.6,118.0 63.0,116.0 64.4,118.0 65.8,116.0 67.2,118.0 68.6,116.0 70.0,118.0 71.4,116.0 72.8,118.0 74.2,116.0 75.6,118.0 77.0,116.0 78.4,118.0 79.8,116.0 81.2,118.0 82.6,116.0 84.0,118.0 85.4,116.0 86.8,118.0 88.2,116.0 89.6,118.0 91.0,116.0 92.4,118.0 93.8,116.0 95.2,118.0 96.6,116.0 98.0,118.0 99.4,116.0 100.8,118.0 102.2,116.0 103.6,118.0 105.0,116.0 106.4,118.0 107.8,116.0 109.2,118.0 110.6,116.0 112.0,118.0 113.4,116.0 114.8,118.0 116.2,116.0 117.6,118.0 119.0,116.0 120.4,118.0 121.8,116.0 123.2,118.0 124.6,116.0 126.0,118.0 127.4,116.0 128.8,118.0 130.2,116.0 131.6,118.0 133.0,116.0 134.4,118.0 135.8,116.0 137.2,118.0 138.6,116.0 140.0,118.0 141.4,116.0 142.8,118.0 144.2,116.0 145.6,118.0 147.0,116.0 148.4,118.0 149.8,116.0 151.2,118.0 152.6,116.0 154.0,118.0 155.4,116.0 156.8,118.0 158.2,116.0 159.6,118.0 161.0,116.0 162.4,118.0 163.8,116.0 165.2,118.0 166.6,116.0 168.0,118.0 169.4,116.0 170.8,118.0 172.2,116.0 173.6,118.0" fill="none" stroke="#64a2e2" stroke-width="1.05"/><polyline points="18.2,190.2 19.6,192.2 21.0,190.2 22.4,192.2 23.8,190.2 25.2,192.2 26.6,190.2 28.0,192.2 29.4,190.2 30.8,192.2 32.2,190.2 33.6,192.2 35.0,190.2 36.4,192.2 37.8,190.2 39.2,192.2 40.6,190.2 42.0,192.2 43.4,190.2 44.8,192.2 46.2,190.2 47.6,192.2 49.0,190.2 50.4,192.2 51.8,190.2 53.2,192.2 54.6,190.2 56.0,192.2 57.4,190.2 58.8,192.2 60.2,190.2 61.6,192.2 63.0,190.2 64.4,192.2 65.8,190.2 67.2,192.2 68.6,190.2 70.0,192.2 71.4,190.2 72.8,192.2 74.2,190.2 75.6,192.2 77.0,190.2 78.4,192.2 79.8,190.2 81.2,192.2 82.6,190.2 84.0,192.2 85.4,190.2 86.8,192.2 88.2,190.2 89.6,192.2 91.0,190.2 92.4,192.2 93.8,190.2 95.2,192.2 96.6,190.2 98.0,192.2 99.4,190.2 100.8,192.2 102.2,190.2 103.6,192.2 105.0,190.2 106.4,192.2 107.8,190.2 109.2,192.2 110.6,190.2 112.0,192.2 113.4,190.2 114.8,192.2 116.2,190.2 117.6,192.2 119.0,190.2 120.4,192.2 121.8,190.2 123.2,192.2 124.6,190.2 126.0,192.2 127.4,190.2 128.8,192.2 130.2,190.2 131.6,192.2 133.0,190.2 134.4,192.2 135.8,190.2 137.2,192.2 138.6,190.2 140.0,192.2 141.4,190.2 142.8,192.2 144.2,190.2 145.6,192.2 147.0,190.2 148.4,192.2 149.8,190.2 151.2,192.2 152.6,190.2 154.0,192.2 155.4,190.2 156.8,192.2 158.2,190.2 159.6,192.2 161.0,190.2 162.4,192.2 163.8,190.2 165.2,192.2 166.6,190.2 168.0,192.2 169.4,190.2 170.8,192.2 172.2,190.2 173.6,192.2" fill="none" stroke="#64a2e2" stroke-width="1.05"/><polyline points="17.2,117.0 19.2,118.4 17.2,119.8 19.2,121.2 17.2,122.6 19.2,124.0 17.2,125.4 19.2,126.8 17.2,128.2 19.2,129.6 17.2,131.0 19.2,132.4 17.2,133.8 19.2,135.2 17.2,136.6 19.2,138.0 17.2,139.4 19.2,140.8 17.2,142.2 19.2,143.6 17.2,145.0 19.2,146.4 17.2,147.8 19.2,149.2 17.2,150.6 19.2,152.0 17.2,153.4 19.2,154.8 17.2,156.2 19.2,157.6 17.2,159.0 19.2,160.4 17.2,161.8 19.2,163.2 17.2,164.6 19.2,166.0 17.2,167.4 19.2,168.8 17.2,170.2 19.2,171.6 17.2,173.0 19.2,174.4 17.2,175.8 19.2,177.2 17.2,178.6 19.2,180.0 17.2,181.4 19.2,182.8 17.2,184.2 19.2,185.6 17.2,187.0 19.2,188.4 17.2,189.8 19.2,191.2" fill="none" stroke="#64a2e2" stroke-width="1.05"/><polyline points="173.0,117.0 175.0,118.4 173.0,119.8 175.0,121.2 173.0,122.6 175.0,124.0 173.0,125.4 175.0,126.8 173.0,128.2 175.0,129.6 173.0,131.0 175.0,132.4 173.0,133.8 175.0,135.2 173.0,136.6 175.0,138.0 173.0,139.4 175.0,140.8 173.0,142.2 175.0,143.6 173.0,145.0 175.0,146.4 173.0,147.8 175.0,149.2 173.0,150.6 175.0,152.0 173.0,153.4 175.0,154.8 173.0,156.2 175.0,157.6 173.0,159.0 175.0,160.4 173.0,161.8 175.0,163.2 173.0,164.6 175.0,166.0 173.0,167.4 175.0,168.8 173.0,170.2 175.0,171.6 173.0,173.0 175.0,174.4 173.0,175.8 175.0,177.2 173.0,178.6 175.0,180.0 173.0,181.4 175.0,182.8 173.0,184.2 175.0,185.6 173.0,187.0 175.0,188.4 173.0,189.8 175.0,191.2" fill="none" stroke="#64a2e2" stroke-width="1.05"/><polyline points="92.2,117.0 94.2,118.4 92.2,119.8 94.2,121.2 92.2,122.6 94.2,124.0 92.2,125.4 94.2,126.8 92.2,128.2 94.2,129.6 92.2,131.0 94.2,132.4 92.2,133.8 94.2,135.2 92.2,136.6 94.2,138.0 92.2,139.4 94.2,140.8 92.2,142.2 94.2,143.6 92.2,145.0 94.2,146.4 92.2,147.8 94.2,149.2 92.2,150.6 94.2,152.0 92.2,153.4 94.2,154.8 92.2,156.2 94.2,157.6 92.2,159.0 94.2,160.4 92.2,161.8 94.2,163.2 92.2,164.6 94.2,166.0 92.2,167.4 94.2,168.8 92.2,170.2 94.2,171.6 92.2,173.0 94.2,174.4 92.2,175.8 94.2,177.2 92.2,178.6 94.2,180.0 92.2,181.4 94.2,182.8 92.2,184.2 94.2,185.6 92.2,187.0 94.2,188.4 92.2,189.8 94.2,191.2" fill="none" stroke="#64a2e2" stroke-width="1.05"/><rect x="29.0" y="133.0" width="55.7" height="40.7" fill="#27548a" stroke="#5d95d2" stroke-width="0.9" opacity="1"/><path d="M29.0,156.7L32.5,151.5L36.6,146.8L41.2,143.7L46.0,138.5L51.1,133.5L54.5,136.5L58.0,138.4L61.0,141.5L64.0,144.5L70.0,147.5L77.9,150.6L81.0,153.0L84.0,156.7" fill="none" stroke="#c9d3dc" stroke-width="0.8"/><text x="53.5" y="175.5" font-size="36.8" font-family="Liberation Sans" fill="#ffffff" >ImageView</text><rect x="29.0" y="133.0" width="55.7" height="40.7" fill="#3a6a9a" stroke="#5d95d2" stroke-width="0" opacity="0.45"/><text x="38.0" y="160.5" font-size="6.6" font-family="Liberation Sans" fill="#e8eef4" >ImageView</text><rect x="29.0" y="133.0" width="55.7" height="40.7" fill="none" stroke="#5d95d2" stroke-width="0.9" opacity="1"/><rect x="108.2" y="138.0" width="39.1" height="26.0" fill="#2d5d8e" stroke="#5d95d2" stroke-width="0" opacity="0.6"/><rect x="108.2" y="161.2" width="64.1" height="8.3" fill="#2d5d8e" stroke="#5d95d2" stroke-width="0" opacity="0.6"/><polyline points="108.2,136.8 109.6,138.8 111.0,136.8 112.4,138.8 113.8,136.8 115.2,138.8 116.6,136.8 118.0,138.8 119.4,136.8 120.8,138.8 122.2,136.8 123.6,138.8 125.0,136.8 126.4,138.8 127.8,136.8 129.2,138.8 130.6,136.8 132.0,138.8 133.4,136.8 134.8,138.8 136.2,136.8 137.6,138.8 139.0,136.8 140.4,138.8 141.8,136.8 143.2,138.8 144.6,136.8 146.0,138.8 147.4,136.8 148.8,138.8 150.2,136.8 151.6,138.8 153.0,136.8 154.4,138.8 155.8,136.8 157.2,138.8 158.6,136.8 160.0,138.8 161.4,136.8 162.8,138.8 164.2,136.8 165.6,138.8 167.0,136.8 168.4,138.8 169.8,136.8 171.2,138.8" fill="none" stroke="#64a2e2" stroke-width="1.05"/><polyline points="108.2,168.5 109.6,170.5 111.0,168.5 112.4,170.5 113.8,168.5 115.2,170.5 116.6,168.5 118.0,170.5 119.4,168.5 120.8,170.5 122.2,168.5 123.6,170.5 125.0,168.5 126.4,170.5 127.8,168.5 129.2,170.5 130.6,168.5 132.0,170.5 133.4,168.5 134.8,170.5 136.2,168.5 137.6,170.5 139.0,168.5 140.4,170.5 141.8,168.5 143.2,170.5 144.6,168.5 146.0,170.5 147.4,168.5 148.8,170.5 150.2,168.5 151.6,170.5 153.0,168.5 154.4,170.5 155.8,168.5 157.2,170.5 158.6,168.5 160.0,170.5 161.4,168.5 162.8,170.5 164.2,168.5 165.6,170.5 167.0,168.5 168.4,170.5 169.8,168.5 171.2,170.5" fill="none" stroke="#64a2e2" stroke-width="1.05"/><polyline points="107.2,137.8 109.2,139.2 107.2,140.6 109.2,142.0 107.2,143.4 109.2,144.8 107.2,146.2 109.2,147.6 107.2,149.0 109.2,150.4 107.2,151.8 109.2,153.2 107.2,154.6 109.2,156.0 107.2,157.4 109.2,158.8 107.2,160.2 109.2,161.6 107.2,163.0 109.2,164.4 107.2,165.8 109.2,167.2 107.2,168.6" fill="none" stroke="#64a2e2" stroke-width="1.05"/><polyline points="171.3,137.8 173.3,139.2 171.3,140.6 173.3,142.0 171.3,143.4 173.3,144.8 171.3,146.2 173.3,147.6 171.3,149.0 173.3,150.4 171.3,151.8 173.3,153.2 171.3,154.6 173.3,156.0 171.3,157.4 173.3,158.8 171.3,160.2 173.3,161.6 171.3,163.0 173.3,164.4 171.3,165.8 173.3,167.2 171.3,168.6" fill="none" stroke="#64a2e2" stroke-width="1.05"/><polyline points="108.2,160.2 109.6,162.2 111.0,160.2 112.4,162.2 113.8,160.2 115.2,162.2 116.6,160.2 118.0,162.2 119.4,160.2 120.8,162.2 122.2,160.2 123.6,162.2 125.0,160.2 126.4,162.2 127.8,160.2 129.2,162.2 130.6,160.2 132.0,162.2 133.4,160.2 134.8,162.2 136.2,160.2 137.6,162.2 139.0,160.2 140.4,162.2 141.8,160.2 143.2,162.2 144.6,160.2 146.0,162.2 147.4,160.2 148.8,162.2 150.2,160.2 151.6,162.2 153.0,160.2 154.4,162.2 155.8,160.2 157.2,162.2 158.6,160.2 160.0,162.2 161.4,160.2 162.8,162.2 164.2,160.2 165.6,162.2 167.0,160.2 168.4,162.2 169.8,160.2 171.2,162.2" fill="none" stroke="#64a2e2" stroke-width="1.05"/><rect x="108.2" y="138.0" width="39.1" height="26.0" fill="none" stroke="#4f86c0" stroke-width="0.9" opacity="1"/><text x="110.5" y="144.3" font-size="10.8" font-family="Liberation Sans" fill="#6e9fd6" >rako</text><polyline points="0.0,201.8 1.4,203.8 2.8,201.8 4.2,203.8 5.6,201.8 7.0,203.8 8.4,201.8 9.8,203.8 11.2,201.8 12.6,203.8 14.0,201.8 15.4,203.8 16.8,201.8 18.2,203.8 19.6,201.8 21.0,203.8 22.4,201.8 23.8,203.8 25.2,201.8 26.6,203.8 28.0,201.8 29.4,203.8 30.8,201.8 32.2,203.8 33.6,201.8 35.0,203.8 36.4,201.8 37.8,203.8 39.2,201.8 40.6,203.8 42.0,201.8 43.4,203.8 44.8,201.8 46.2,203.8 47.6,201.8 49.0,203.8 50.4,201.8 51.8,203.8 53.2,201.8 54.6,203.8 56.0,201.8 57.4,203.8 58.8,201.8 60.2,203.8 61.6,201.8 63.0,203.8 64.4,201.8 65.8,203.8 67.2,201.8 68.6,203.8 70.0,201.8 71.4,203.8 72.8,201.8 74.2,203.8 75.6,201.8 77.0,203.8 78.4,201.8 79.8,203.8 81.2,201.8 82.6,203.8 84.0,201.8 85.4,203.8 86.8,201.8 88.2,203.8 89.6,201.8 91.0,203.8 92.4,201.8 93.8,203.8 95.2,201.8 96.6,203.8 98.0,201.8 99.4,203.8 100.8,201.8 102.2,203.8 103.6,201.8 105.0,203.8 106.4,201.8 107.8,203.8 109.2,201.8 110.6,203.8 112.0,201.8 113.4,203.8 114.8,201.8 116.2,203.8 117.6,201.8 119.0,203.8 120.4,201.8 121.8,203.8 123.2,201.8 124.6,203.8 126.0,201.8 127.4,203.8 128.8,201.8 130.2,203.8 131.6,201.8 133.0,203.8 134.4,201.8 135.8,203.8 137.2,201.8 138.6,203.8 140.0,201.8 141.4,203.8 142.8,201.8 144.2,203.8 145.6,201.8 147.0,203.8 148.4,201.8 149.8,203.8 151.2,201.8 152.6,203.8 154.0,201.8 155.4,203.8 156.8,201.8 158.2,203.8 159.6,201.8 161.0,203.8 162.4,201.8 163.8,203.8 165.2,201.8 166.6,203.8 168.0,201.8 169.4,203.8 170.8,201.8 172.2,203.8 173.6,201.8 175.0,203.8 176.4,201.8 177.8,203.8 179.2,201.8 180.6,203.8 182.0,201.8 183.4,203.8 184.8,201.8 186.2,203.8 187.6,201.8 189.0,203.8 190.4,201.8 191.8,203.8 193.2,201.8 194.6,203.8 196.0,201.8 197.4,203.8 198.8,201.8 200.2,203.8 201.6,201.8 203.0,203.8 204.4,201.8 205.8,203.8 207.2,201.8 208.6,203.8 210.0,201.8 211.4,203.8 212.8,201.8 214.2,203.8 215.6,201.8 217.0,203.8 218.4,201.8 219.8,203.8 221.2,201.8 222.6,203.8 224.0,201.8 225.4,203.8 226.8,201.8 228.2,203.8 229.6,201.8 231.0,203.8 232.4,201.8 233.8,203.8 235.2,201.8 236.6,203.8 238.0,201.8 239.4,203.8 240.8,201.8 242.2,203.8 243.6,201.8 245.0,203.8 246.4,201.8 247.8,203.8 249.2,201.8 250.6,203.8 252.0,201.8 253.4,203.8 254.8,201.8 256.2,203.8 257.6,201.8 259.0,203.8 260.4,201.8 261.8,203.8 263.2,201.8 264.6,203.8 266.0,201.8 267.4,203.8 268.8,201.8 270.2,203.8 271.6,201.8 273.0,203.8 274.4,201.8 275.8,203.8 277.2,201.8 278.6,203.8 280.0,201.8 281.4,203.8 282.8,201.8 284.2,203.8 285.6,201.8 287.0,203.8" fill="none" stroke="#64a2e2" stroke-width="1.05"/><rect x="120.7" y="180.3" width="47.8" height="47.7" fill="#2a5a8c" stroke="#6aa0da" stroke-width="0.9" opacity="1"/><rect x="123.2" y="184.0" width="43.1" height="40.0" fill="#2c6096" stroke="#e6ecf5" stroke-width="1.6" opacity="1"/><polyline points="142.7,228.0 144.7,229.4 142.7,230.8 144.7,232.2 142.7,233.6 144.7,235.0 142.7,236.4 144.7,237.8 142.7,239.2 144.7,240.6 142.7,242.0 144.7,243.4 142.7,244.8 144.7,246.2 142.7,247.6 144.7,249.0 142.7,250.4 144.7,251.8 142.7,253.2 144.7,254.6 142.7,256.0 144.7,257.4 142.7,258.8 144.7,260.2 142.7,261.6 144.7,263.0 142.7,264.4 144.7,265.8 142.7,267.2 144.7,268.6 142.7,270.0" fill="none" stroke="#64a2e2" stroke-width="1.05"/><rect x="58.6" y="218.0" width="26.4" height="25.0" fill="#2a5584" stroke="#5d95d2" stroke-width="0" opacity="1"/><polyline points="58.6,217.0 60.0,219.0 61.4,217.0 62.8,219.0 64.2,217.0 65.6,219.0 67.0,217.0 68.4,219.0 69.8,217.0 71.2,219.0 72.6,217.0 74.0,219.0 75.4,217.0 76.8,219.0 78.2,217.0 79.6,219.0 81.0,217.0 82.4,219.0 83.8,217.0" fill="none" stroke="#64a2e2" stroke-width="1.05"/><text x="59.5" y="239.0" font-size="17.2" font-family="Liberation Sans" fill="#6aa0d8" >12</text><polyline points="38.0,242.0 39.4,244.0 40.8,242.0 42.2,244.0 43.6,242.0 45.0,244.0 46.4,242.0 47.8,244.0 49.2,242.0 50.6,244.0 52.0,242.0 53.4,244.0 54.8,242.0 56.2,244.0 57.6,242.0 59.0,244.0 60.4,242.0 61.8,244.0 63.2,242.0 64.6,244.0 66.0,242.0 67.4,244.0 68.8,242.0 70.2,244.0 71.6,242.0 73.0,244.0 74.4,242.0 75.8,244.0 77.2,242.0 78.6,244.0 80.0,242.0 81.4,244.0 82.8,242.0 84.2,244.0 85.6,242.0 87.0,244.0 88.4,242.0 89.8,244.0 91.2,242.0 92.6,244.0 94.0,242.0 95.4,244.0 96.8,242.0 98.2,244.0 99.6,242.0 101.0,244.0 102.4,242.0 103.8,244.0 105.2,242.0 106.6,244.0" fill="none" stroke="#64a2e2" stroke-width="1.05"/><polyline points="38.0,252.3 39.4,254.3 40.8,252.3 42.2,254.3 43.6,252.3 45.0,254.3 46.4,252.3 47.8,254.3 49.2,252.3 50.6,254.3 52.0,252.3 53.4,254.3 54.8,252.3 56.2,254.3 57.6,252.3 59.0,254.3 60.4,252.3 61.8,254.3 63.2,252.3 64.6,254.3 66.0,252.3 67.4,254.3 68.8,252.3 70.2,254.3 71.6,252.3 73.0,254.3 74.4,252.3 75.8,254.3 77.2,252.3 78.6,254.3 80.0,252.3 81.4,254.3 82.8,252.3 84.2,254.3 85.6,252.3 87.0,254.3 88.4,252.3 89.8,254.3 91.2,252.3 92.6,254.3 94.0,252.3 95.4,254.3 96.8,252.3 98.2,254.3 99.6,252.3 101.0,254.3 102.4,252.3 103.8,254.3 105.2,252.3 106.6,254.3" fill="none" stroke="#64a2e2" stroke-width="1.05"/><polyline points="37.0,243.0 39.0,244.4 37.0,245.8 39.0,247.2 37.0,248.6 39.0,250.0 37.0,251.4 39.0,252.8" fill="none" stroke="#64a2e2" stroke-width="1.05"/><polyline points="106.4,243.0 108.4,244.4 106.4,245.8 108.4,247.2 106.4,248.6 108.4,250.0 106.4,251.4 108.4,252.8" fill="none" stroke="#64a2e2" stroke-width="1.05"/><text x="39.0" y="251.8" font-size="6.8" font-family="Liberation Sans" fill="#5d8fc6" >remaining tasks</text><rect x="203.0" y="218.0" width="28.5" height="25.0" fill="#2a5584" stroke="#5d95d2" stroke-width="0" opacity="1"/><polyline points="203.0,217.0 204.4,219.0 205.8,217.0 207.2,219.0 208.6,217.0 210.0,219.0 211.4,217.0 212.8,219.0 214.2,217.0 215.6,219.0 217.0,217.0 218.4,219.0 219.8,217.0 221.2,219.0 222.6,217.0 224.0,219.0 225.4,217.0 226.8,219.0 228.2,217.0 229.6,219.0 231.0,217.0" fill="none" stroke="#64a2e2" stroke-width="1.05"/><text x="203.5" y="239.0" font-size="17.2" font-family="Liberation Sans" fill="#6aa0d8" >32</text><polyline points="182.3,242.0 183.7,244.0 185.1,242.0 186.5,244.0 187.9,242.0 189.3,244.0 190.7,242.0 192.1,244.0 193.5,242.0 194.9,244.0 196.3,242.0 197.7,244.0 199.1,242.0 200.5,244.0 201.9,242.0 203.3,244.0 204.7,242.0 206.1,244.0 207.5,242.0 208.9,244.0 210.3,242.0 211.7,244.0 213.1,242.0 214.5,244.0 215.9,242.0 217.3,244.0 218.7,242.0 220.1,244.0 221.5,242.0 222.9,244.0 224.3,242.0 225.7,244.0 227.1,242.0 228.5,244.0 229.9,242.0 231.3,244.0 232.7,242.0 234.1,244.0 235.5,242.0 236.9,244.0 238.3,242.0 239.7,244.0 241.1,242.0 242.5,244.0 243.9,242.0 245.3,244.0 246.7,242.0 248.1,244.0 249.5,242.0 250.9,244.0 252.3,242.0 253.7,244.0" fill="none" stroke="#64a2e2" stroke-width="1.05"/><polyline points="182.3,252.3 183.7,254.3 185.1,252.3 186.5,254.3 187.9,252.3 189.3,254.3 190.7,252.3 192.1,254.3 193.5,252.3 194.9,254.3 196.3,252.3 197.7,254.3 199.1,252.3 200.5,254.3 201.9,252.3 203.3,254.3 204.7,252.3 206.1,254.3 207.5,252.3 208.9,254.3 210.3,252.3 211.7,254.3 213.1,252.3 214.5,254.3 215.9,252.3 217.3,254.3 218.7,252.3 220.1,254.3 221.5,252.3 222.9,254.3 224.3,252.3 225.7,254.3 227.1,252.3 228.5,254.3 229.9,252.3 231.3,254.3 232.7,252.3 234.1,254.3 235.5,252.3 236.9,254.3 238.3,252.3 239.7,254.3 241.1,252.3 242.5,254.3 243.9,252.3 245.3,254.3 246.7,252.3 248.1,254.3 249.5,252.3 250.9,254.3 252.3,252.3 253.7,254.3" fill="none" stroke="#64a2e2" stroke-width="1.05"/><polyline points="181.3,243.0 183.3,244.4 181.3,245.8 183.3,247.2 181.3,248.6 183.3,250.0 181.3,251.4 183.3,252.8" fill="none" stroke="#64a2e2" stroke-width="1.05"/><polyline points="253.5,243.0 255.5,244.4 253.5,245.8 255.5,247.2 253.5,248.6 255.5,250.0 253.5,251.4 255.5,252.8" fill="none" stroke="#64a2e2" stroke-width="1.05"/><text x="183.0" y="251.8" font-size="6.8" font-family="Liberation Sans" fill="#5d8fc6" >completed tasks</text><polyline points="286.4,203.0 288.4,204.4 286.4,205.8 288.4,207.2 286.4,208.6 288.4,210.0 286.4,211.4 288.4,212.8 286.4,214.2 288.4,215.6 286.4,217.0 288.4,218.4 286.4,219.8 288.4,221.2 286.4,222.6 288.4,224.0 286.4,225.4 288.4,226.8 286.4,228.2 288.4,229.6 286.4,231.0 288.4,232.4 286.4,233.8 288.4,235.2 286.4,236.6 288.4,238.0 286.4,239.4 288.4,240.8 286.4,242.2 288.4,243.6 286.4,245.0 288.4,246.4 286.4,247.8 288.4,249.2 286.4,250.6 288.4,252.0 286.4,253.4 288.4,254.8 286.4,256.2 288.4,257.6 286.4,259.0 288.4,260.4 286.4,261.8 288.4,263.2 286.4,264.6 288.4,266.0 286.4,267.4 288.4,268.8 286.4,270.2" fill="none" stroke="#64a2e2" stroke-width="1.05"/><polyline points="0.0,270.0 1.4,272.0 2.8,270.0 4.2,272.0 5.6,270.0 7.0,272.0 8.4,270.0 9.8,272.0 11.2,270.0 12.6,272.0 14.0,270.0 15.4,272.0 16.8,270.0 18.2,272.0 19.6,270.0 21.0,272.0 22.4,270.0 23.8,272.0 25.2,270.0 26.6,272.0 28.0,270.0 29.4,272.0 30.8,270.0 32.2,272.0 33.6,270.0 35.0,272.0 36.4,270.0 37.8,272.0 39.2,270.0 40.6,272.0 42.0,270.0 43.4,272.0 44.8,270.0 46.2,272.0 47.6,270.0 49.0,272.0 50.4,270.0 51.8,272.0 53.2,270.0 54.6,272.0 56.0,270.0 57.4,272.0 58.8,270.0 60.2,272.0 61.6,270.0 63.0,272.0 64.4,270.0 65.8,272.0 67.2,270.0 68.6,272.0 70.0,270.0 71.4,272.0 72.8,270.0 74.2,272.0 75.6,270.0 77.0,272.0 78.4,270.0 79.8,272.0 81.2,270.0 82.6,272.0 84.0,270.0 85.4,272.0 86.8,270.0 88.2,272.0 89.6,270.0 91.0,272.0 92.4,270.0 93.8,272.0 95.2,270.0 96.6,272.0 98.0,270.0 99.4,272.0 100.8,270.0 102.2,272.0 103.6,270.0 105.0,272.0 106.4,270.0 107.8,272.0 109.2,270.0 110.6,272.0 112.0,270.0 113.4,272.0 114.8,270.0 116.2,272.0 117.6,270.0 119.0,272.0 120.4,270.0 121.8,272.0 123.2,270.0 124.6,272.0 126.0,270.0 127.4,272.0 128.8,270.0 130.2,272.0 131.6,270.0 133.0,272.0 134.4,270.0 135.8,272.0 137.2,270.0 138.6,272.0 140.0,270.0 141.4,272.0 142.8,270.0 144.2,272.0 145.6,270.0 147.0,272.0 148.4,270.0 149.8,272.0 151.2,270.0 152.6,272.0 154.0,270.0 155.4,272.0 156.8,270.0 158.2,272.0 159.6,270.0 161.0,272.0 162.4,270.0 163.8,272.0 165.2,270.0 166.6,272.0 168.0,270.0 169.4,272.0 170.8,270.0 172.2,272.0 173.6,270.0 175.0,272.0 176.4,270.0 177.8,272.0 179.2,270.0 180.6,272.0 182.0,270.0 183.4,272.0 184.8,270.0 186.2,272.0 187.6,270.0 189.0,272.0 190.4,270.0 191.8,272.0 193.2,270.0 194.6,272.0 196.0,270.0 197.4,272.0 198.8,270.0 200.2,272.0 201.6,270.0 203.0,272.0 204.4,270.0 205.8,272.0 207.2,270.0 208.6,272.0 210.0,270.0 211.4,272.0 212.8,270.0 214.2,272.0 215.6,270.0 217.0,272.0 218.4,270.0 219.8,272.0 221.2,270.0 222.6,272.0 224.0,270.0 225.4,272.0 226.8,270.0 228.2,272.0 229.6,270.0 231.0,272.0 232.4,270.0 233.8,272.0 235.2,270.0 236.6,272.0 238.0,270.0 239.4,272.0 240.8,270.0 242.2,272.0 243.6,270.0 245.0,272.0 246.4,270.0 247.8,272.0 249.2,270.0 250.6,272.0 252.0,270.0 253.4,272.0 254.8,270.0 256.2,272.0 257.6,270.0 259.0,272.0 260.4,270.0 261.8,272.0 263.2,270.0 264.6,272.0 266.0,270.0 267.4,272.0 268.8,270.0 270.2,272.0 271.6,270.0 273.0,272.0 274.4,270.0 275.8,272.0 277.2,270.0 278.6,272.0 280.0,270.0 281.4,272.0 282.8,270.0 284.2,272.0 285.6,270.0 287.0,272.0" fill="none" stroke="#64a2e2" stroke-width="1.05"/><line x1="2.5" y1="61" x2="2.5" y2="271" stroke="#5d95d2" stroke-width="0.7"/><polyline points="15.7,291.0 17.1,293.0 18.5,291.0 19.9,293.0 21.3,291.0 22.7,293.0 24.1,291.0 25.5,293.0 26.9,291.0 28.3,293.0 29.7,291.0 31.1,293.0 32.5,291.0 33.9,293.0 35.3,291.0 36.7,293.0 38.1,291.0 39.5,293.0 40.9,291.0 42.3,293.0 43.7,291.0 45.1,293.0 46.5,291.0 47.9,293.0" fill="none" stroke="#64a2e2" stroke-width="1.05"/><polyline points="15.7,303.3 17.1,305.3 18.5,303.3 19.9,305.3 21.3,303.3 22.7,305.3 24.1,303.3 25.5,305.3 26.9,303.3 28.3,305.3 29.7,303.3 31.1,305.3 32.5,303.3 33.9,305.3 35.3,303.3 36.7,305.3 38.1,303.3 39.5,305.3 40.9,303.3 42.3,305.3 43.7,303.3 45.1,305.3 46.5,303.3 47.9,305.3" fill="none" stroke="#64a2e2" stroke-width="1.05"/><polyline points="14.7,292.0 16.7,293.4 14.7,294.8 16.7,296.2 14.7,297.6 16.7,299.0 14.7,300.4 16.7,301.8 14.7,303.2" fill="none" stroke="#64a2e2" stroke-width="1.05"/><polyline points="48.0,292.0 50.0,293.4 48.0,294.8 50.0,296.2 48.0,297.6 50.0,299.0 48.0,300.4 50.0,301.8 48.0,303.2" fill="none" stroke="#64a2e2" stroke-width="1.05"/><text x="17.0" y="302.3" font-size="7.1" font-family="Liberation Sans" fill="#5d8fc6" >TODAY</text><polyline points="15.0,315.3 16.4,317.3 17.8,315.3 19.2,317.3 20.6,315.3 22.0,317.3 23.4,315.3 24.8,317.3 26.2,315.3 27.6,317.3 29.0,315.3 30.4,317.3 31.8,315.3 33.2,317.3 34.6,315.3 36.0,317.3 37.4,315.3 38.8,317.3 40.2,315.3 41.6,317.3 43.0,315.3 44.4,317.3 45.8,315.3 47.2,317.3 48.6,315.3 50.0,317.3 51.4,315.3 52.8,317.3 54.2,315.3 55.6,317.3 57.0,315.3 58.4,317.3 59.8,315.3 61.2,317.3 62.6,315.3 64.0,317.3 65.4,315.3 66.8,317.3 68.2,315.3 69.6,317.3 71.0,315.3 72.4,317.3 73.8,315.3 75.2,317.3 76.6,315.3 78.0,317.3 79.4,315.3 80.8,317.3 82.2,315.3 83.6,317.3 85.0,315.3 86.4,317.3 87.8,315.3 89.2,317.3 90.6,315.3 92.0,317.3 93.4,315.3 94.8,317.3 96.2,315.3 97.6,317.3 99.0,315.3 100.4,317.3 101.8,315.3 103.2,317.3 104.6,315.3 106.0,317.3 107.4,315.3 108.8,317.3 110.2,315.3 111.6,317.3 113.0,315.3 114.4,317.3 115.8,315.3 117.2,317.3 118.6,315.3 120.0,317.3 121.4,315.3 122.8,317.3 124.2,315.3 125.6,317.3 127.0,315.3 128.4,317.3 129.8,315.3 131.2,317.3 132.6,315.3 134.0,317.3 135.4,315.3 136.8,317.3 138.2,315.3 139.6,317.3 141.0,315.3 142.4,317.3 143.8,315.3 145.2,317.3 146.6,315.3 148.0,317.3 149.4,315.3 150.8,317.3 152.2,315.3 153.6,317.3 155.0,315.3 156.4,317.3 157.8,315.3 159.2,317.3 160.6,315.3 162.0,317.3 163.4,315.3 164.8,317.3 166.2,315.3 167.6,317.3 169.0,315.3 170.4,317.3 171.8,315.3 173.2,317.3 174.6,315.3 176.0,317.3 177.4,315.3 178.8,317.3 180.2,315.3 181.6,317.3 183.0,315.3 184.4,317.3 185.8,315.3 187.2,317.3 188.6,315.3 190.0,317.3 191.4,315.3 192.8,317.3 194.2,315.3 195.6,317.3 197.0,315.3 198.4,317.3 199.8,315.3 201.2,317.3 202.6,315.3 204.0,317.3 205.4,315.3 206.8,317.3 208.2,315.3 209.6,317.3 211.0,315.3 212.4,317.3 213.8,315.3 215.2,317.3 216.6,315.3 218.0,317.3 219.4,315.3 220.8,317.3 222.2,315.3" fill="none" stroke="#64a2e2" stroke-width="1.05"/><polyline points="15.0,327.0 16.4,329.0 17.8,327.0 19.2,329.0 20.6,327.0 22.0,329.0 23.4,327.0 24.8,329.0 26.2,327.0 27.6,329.0 29.0,327.0 30.4,329.0 31.8,327.0 33.2,329.0 34.6,327.0 36.0,329.0 37.4,327.0 38.8,329.0 40.2,327.0 41.6,329.0 43.0,327.0 44.4,329.0 45.8,327.0 47.2,329.0 48.6,327.0 50.0,329.0 51.4,327.0 52.8,329.0 54.2,327.0 55.6,329.0 57.0,327.0 58.4,329.0 59.8,327.0 61.2,329.0 62.6,327.0 64.0,329.0 65.4,327.0 66.8,329.0 68.2,327.0 69.6,329.0 71.0,327.0 72.4,329.0 73.8,327.0 75.2,329.0 76.6,327.0 78.0,329.0 79.4,327.0 80.8,329.0 82.2,327.0 83.6,329.0 85.0,327.0 86.4,329.0 87.8,327.0 89.2,329.0 90.6,327.0 92.0,329.0 93.4,327.0 94.8,329.0 96.2,327.0 97.6,329.0 99.0,327.0 100.4,329.0 101.8,327.0 103.2,329.0 104.6,327.0 106.0,329.0 107.4,327.0 108.8,329.0 110.2,327.0 111.6,329.0 113.0,327.0 114.4,329.0 115.8,327.0 117.2,329.0 118.6,327.0 120.0,329.0 121.4,327.0 122.8,329.0 124.2,327.0 125.6,329.0 127.0,327.0 128.4,329.0 129.8,327.0 131.2,329.0 132.6,327.0 134.0,329.0 135.4,327.0 136.8,329.0 138.2,327.0 139.6,329.0 141.0,327.0 142.4,329.0 143.8,327.0 145.2,329.0 146.6,327.0 148.0,329.0 149.4,327.0 150.8,329.0 152.2,327.0 153.6,329.0 155.0,327.0 156.4,329.0 157.8,327.0 159.2,329.0 160.6,327.0 162.0,329.0 163.4,327.0 164.8,329.0 166.2,327.0 167.6,329.0 169.0,327.0 170.4,329.0 171.8,327.0 173.2,329.0 174.6,327.0 176.0,329.0 177.4,327.0 178.8,329.0 180.2,327.0 181.6,329.0 183.0,327.0 184.4,329.0 185.8,327.0 187.2,329.0 188.6,327.0 190.0,329.0 191.4,327.0 192.8,329.0 194.2,327.0 195.6,329.0 197.0,327.0 198.4,329.0 199.8,327.0 201.2,329.0 202.6,327.0 204.0,329.0 205.4,327.0 206.8,329.0 208.2,327.0 209.6,329.0 211.0,327.0 212.4,329.0 213.8,327.0 215.2,329.0 216.6,327.0 218.0,329.0 219.4,327.0 220.8,329.0 222.2,327.0" fill="none" stroke="#64a2e2" stroke-width="1.05"/><polyline points="14.0,316.3 16.0,317.7 14.0,319.1 16.0,320.5 14.0,321.9 16.0,323.3 14.0,324.7 16.0,326.1 14.0,327.5" fill="none" stroke="#64a2e2" stroke-width="1.05"/><polyline points="222.3,316.3 224.3,317.7 222.3,319.1 224.3,320.5 222.3,321.9 224.3,323.3 222.3,324.7 224.3,326.1 222.3,327.5" fill="none" stroke="#64a2e2" stroke-width="1.05"/><polyline points="42.3,316.3 44.3,317.7 42.3,319.1 44.3,320.5 42.3,321.9 44.3,323.3 42.3,324.7 44.3,326.1 42.3,327.5" fill="none" stroke="#64a2e2" stroke-width="1.05"/><polyline points="203.0,316.3 205.0,317.7 203.0,319.1 205.0,320.5 203.0,321.9 205.0,323.3 203.0,324.7 205.0,326.1 203.0,327.5" fill="none" stroke="#64a2e2" stroke-width="1.05"/><rect x="27.0" y="318.3" width="16.3" height="7.7" fill="#26507e" stroke="#5d95d2" stroke-width="0" opacity="1"/><rect x="43.3" y="317.1" width="160.7" height="10.1" fill="#26517f" stroke="#5d95d2" stroke-width="0" opacity="1"/><path d="M18,319.3 l3,3 -3,3 M219.29999999999995,319.3 l-3,3 3,3" fill="none" stroke="#5d95d2" stroke-width="0.7"/><svg x="43.299999999999955" y="316.3" width="160.70000000000005" height="11.199999999999989" style="overflow:hidden"><text x="0.3" y="12.9" font-size="9.6" font-family="Liberation Sans" fill="#5d8fc6">Finish landing page concept</text></svg><path d="M0,320.3h3M0,325h3" stroke="#5d95d2" stroke-width="0.8"/><polyline points="15.0,346.0 16.4,348.0 17.8,346.0 19.2,348.0 20.6,346.0 22.0,348.0 23.4,346.0 24.8,348.0 26.2,346.0 27.6,348.0 29.0,346.0 30.4,348.0 31.8,346.0 33.2,348.0 34.6,346.0 36.0,348.0 37.4,346.0 38.8,348.0 40.2,346.0 41.6,348.0 43.0,346.0 44.4,348.0 45.8,346.0 47.2,348.0 48.6,346.0 50.0,348.0 51.4,346.0 52.8,348.0 54.2,346.0 55.6,348.0 57.0,346.0 58.4,348.0 59.8,346.0 61.2,348.0 62.6,346.0 64.0,348.0 65.4,346.0 66.8,348.0 68.2,346.0 69.6,348.0 71.0,346.0 72.4,348.0 73.8,346.0 75.2,348.0 76.6,346.0 78.0,348.0 79.4,346.0 80.8,348.0 82.2,346.0 83.6,348.0 85.0,346.0 86.4,348.0 87.8,346.0 89.2,348.0 90.6,346.0 92.0,348.0 93.4,346.0 94.8,348.0 96.2,346.0 97.6,348.0 99.0,346.0 100.4,348.0 101.8,346.0 103.2,348.0 104.6,346.0 106.0,348.0 107.4,346.0 108.8,348.0 110.2,346.0 111.6,348.0 113.0,346.0 114.4,348.0 115.8,346.0 117.2,348.0 118.6,346.0 120.0,348.0 121.4,346.0 122.8,348.0 124.2,346.0 125.6,348.0 127.0,346.0 128.4,348.0 129.8,346.0 131.2,348.0 132.6,346.0 134.0,348.0 135.4,346.0 136.8,348.0 138.2,346.0 139.6,348.0 141.0,346.0 142.4,348.0 143.8,346.0 145.2,348.0 146.6,346.0 148.0,348.0 149.4,346.0 150.8,348.0 152.2,346.0 153.6,348.0 155.0,346.0 156.4,348.0 157.8,346.0 159.2,348.0 160.6,346.0 162.0,348.0 163.4,346.0 164.8,348.0 166.2,346.0 167.6,348.0 169.0,346.0 170.4,348.0 171.8,346.0 173.2,348.0 174.6,346.0 176.0,348.0 177.4,346.0 178.8,348.0 180.2,346.0 181.6,348.0 183.0,346.0 184.4,348.0 185.8,346.0 187.2,348.0 188.6,346.0 190.0,348.0 191.4,346.0 192.8,348.0 194.2,346.0 195.6,348.0" fill="none" stroke="#64a2e2" stroke-width="1.05"/><polyline points="15.0,358.0 16.4,360.0 17.8,358.0 19.2,360.0 20.6,358.0 22.0,360.0 23.4,358.0 24.8,360.0 26.2,358.0 27.6,360.0 29.0,358.0 30.4,360.0 31.8,358.0 33.2,360.0 34.6,358.0 36.0,360.0 37.4,358.0 38.8,360.0 40.2,358.0 41.6,360.0 43.0,358.0 44.4,360.0 45.8,358.0 47.2,360.0 48.6,358.0 50.0,360.0 51.4,358.0 52.8,360.0 54.2,358.0 55.6,360.0 57.0,358.0 58.4,360.0 59.8,358.0 61.2,360.0 62.6,358.0 64.0,360.0 65.4,358.0 66.8,360.0 68.2,358.0 69.6,360.0 71.0,358.0 72.4,360.0 73.8,358.0 75.2,360.0 76.6,358.0 78.0,360.0 79.4,358.0 80.8,360.0 82.2,358.0 83.6,360.0 85.0,358.0 86.4,360.0 87.8,358.0 89.2,360.0 90.6,358.0 92.0,360.0 93.4,358.0 94.8,360.0 96.2,358.0 97.6,360.0 99.0,358.0 100.4,360.0 101.8,358.0 103.2,360.0 104.6,358.0 106.0,360.0 107.4,358.0 108.8,360.0 110.2,358.0 111.6,360.0 113.0,358.0 114.4,360.0 115.8,358.0 117.2,360.0 118.6,358.0 120.0,360.0 121.4,358.0 122.8,360.0 124.2,358.0 125.6,360.0 127.0,358.0 128.4,360.0 129.8,358.0 131.2,360.0 132.6,358.0 134.0,360.0 135.4,358.0 136.8,360.0 138.2,358.0 139.6,360.0 141.0,358.0 142.4,360.0 143.8,358.0 145.2,360.0 146.6,358.0 148.0,360.0 149.4,358.0 150.8,360.0 152.2,358.0 153.6,360.0 155.0,358.0 156.4,360.0 157.8,358.0 159.2,360.0 160.6,358.0 162.0,360.0 163.4,358.0 164.8,360.0 166.2,358.0 167.6,360.0 169.0,358.0 170.4,360.0 171.8,358.0 173.2,360.0 174.6,358.0 176.0,360.0 177.4,358.0 178.8,360.0 180.2,358.0 181.6,360.0 183.0,358.0 184.4,360.0 185.8,358.0 187.2,360.0 188.6,358.0 190.0,360.0 191.4,358.0 192.8,360.0 194.2,358.0 195.6,360.0" fill="none" stroke="#64a2e2" stroke-width="1.05"/><polyline points="14.0,347.0 16.0,348.4 14.0,349.8 16.0,351.2 14.0,352.6 16.0,354.0 14.0,355.4 16.0,356.8 14.0,358.2" fill="none" stroke="#64a2e2" stroke-width="1.05"/><polyline points="195.7,347.0 197.7,348.4 195.7,349.8 197.7,351.2 195.7,352.6 197.7,354.0 195.7,355.4 197.7,356.8 195.7,358.2" fill="none" stroke="#64a2e2" stroke-width="1.05"/><polyline points="42.3,347.0 44.3,348.4 42.3,349.8 44.3,351.2 42.3,352.6 44.3,354.0 42.3,355.4 44.3,356.8 42.3,358.2" fill="none" stroke="#64a2e2" stroke-width="1.05"/><polyline points="184.0,347.0 186.0,348.4 184.0,349.8 186.0,351.2 184.0,352.6 186.0,354.0 184.0,355.4 186.0,356.8 184.0,358.2" fill="none" stroke="#64a2e2" stroke-width="1.05"/><rect x="27.0" y="349.0" width="16.3" height="8.0" fill="#26507e" stroke="#5d95d2" stroke-width="0" opacity="1"/><rect x="43.3" y="347.8" width="141.7" height="10.4" fill="#26517f" stroke="#5d95d2" stroke-width="0" opacity="1"/><path d="M18,350 l3,3 -3,3 M192.70000000000005,350 l-3,3 3,3" fill="none" stroke="#5d95d2" stroke-width="0.7"/><svg x="43.299999999999955" y="347" width="141.70000000000005" height="11.5" style="overflow:hidden"><text x="0.3" y="13.2" font-size="9.6" font-family="Liberation Sans" fill="#5d8fc6">Design app illustrations</text></svg><path d="M0,351h3M0,356h3" stroke="#5d95d2" stroke-width="0.8"/><polyline points="15.0,378.3 16.4,380.3 17.8,378.3 19.2,380.3 20.6,378.3 22.0,380.3 23.4,378.3 24.8,380.3 26.2,378.3 27.6,380.3 29.0,378.3 30.4,380.3 31.8,378.3 33.2,380.3 34.6,378.3 36.0,380.3 37.4,378.3 38.8,380.3 40.2,378.3 41.6,380.3 43.0,378.3 44.4,380.3 45.8,378.3 47.2,380.3 48.6,378.3 50.0,380.3 51.4,378.3 52.8,380.3 54.2,378.3 55.6,380.3 57.0,378.3 58.4,380.3 59.8,378.3 61.2,380.3 62.6,378.3 64.0,380.3 65.4,378.3 66.8,380.3 68.2,378.3 69.6,380.3 71.0,378.3 72.4,380.3 73.8,378.3 75.2,380.3 76.6,378.3 78.0,380.3 79.4,378.3 80.8,380.3 82.2,378.3 83.6,380.3 85.0,378.3 86.4,380.3 87.8,378.3 89.2,380.3 90.6,378.3 92.0,380.3 93.4,378.3 94.8,380.3 96.2,378.3 97.6,380.3 99.0,378.3 100.4,380.3 101.8,378.3 103.2,380.3 104.6,378.3 106.0,380.3 107.4,378.3 108.8,380.3 110.2,378.3 111.6,380.3 113.0,378.3 114.4,380.3 115.8,378.3 117.2,380.3 118.6,378.3 120.0,380.3 121.4,378.3 122.8,380.3 124.2,378.3 125.6,380.3 127.0,378.3 128.4,380.3 129.8,378.3 131.2,380.3 132.6,378.3 134.0,380.3 135.4,378.3 136.8,380.3 138.2,378.3 139.6,380.3 141.0,378.3 142.4,380.3 143.8,378.3 145.2,380.3 146.6,378.3 148.0,380.3 149.4,378.3 150.8,380.3 152.2,378.3 153.6,380.3 155.0,378.3 156.4,380.3 157.8,378.3 159.2,380.3 160.6,378.3 162.0,380.3 163.4,378.3 164.8,380.3 166.2,378.3 167.6,380.3 169.0,378.3" fill="none" stroke="#64a2e2" stroke-width="1.05"/><polyline points="15.0,390.0 16.4,392.0 17.8,390.0 19.2,392.0 20.6,390.0 22.0,392.0 23.4,390.0 24.8,392.0 26.2,390.0 27.6,392.0 29.0,390.0 30.4,392.0 31.8,390.0 33.2,392.0 34.6,390.0 36.0,392.0 37.4,390.0 38.8,392.0 40.2,390.0 41.6,392.0 43.0,390.0 44.4,392.0 45.8,390.0 47.2,392.0 48.6,390.0 50.0,392.0 51.4,390.0 52.8,392.0 54.2,390.0 55.6,392.0 57.0,390.0 58.4,392.0 59.8,390.0 61.2,392.0 62.6,390.0 64.0,392.0 65.4,390.0 66.8,392.0 68.2,390.0 69.6,392.0 71.0,390.0 72.4,392.0 73.8,390.0 75.2,392.0 76.6,390.0 78.0,392.0 79.4,390.0 80.8,392.0 82.2,390.0 83.6,392.0 85.0,390.0 86.4,392.0 87.8,390.0 89.2,392.0 90.6,390.0 92.0,392.0 93.4,390.0 94.8,392.0 96.2,390.0 97.6,392.0 99.0,390.0 100.4,392.0 101.8,390.0 103.2,392.0 104.6,390.0 106.0,392.0 107.4,390.0 108.8,392.0 110.2,390.0 111.6,392.0 113.0,390.0 114.4,392.0 115.8,390.0 117.2,392.0 118.6,390.0 120.0,392.0 121.4,390.0 122.8,392.0 124.2,390.0 125.6,392.0 127.0,390.0 128.4,392.0 129.8,390.0 131.2,392.0 132.6,390.0 134.0,392.0 135.4,390.0 136.8,392.0 138.2,390.0 139.6,392.0 141.0,390.0 142.4,392.0 143.8,390.0 145.2,392.0 146.6,390.0 148.0,392.0 149.4,390.0 150.8,392.0 152.2,390.0 153.6,392.0 155.0,390.0 156.4,392.0 157.8,390.0 159.2,392.0 160.6,390.0 162.0,392.0 163.4,390.0 164.8,392.0 166.2,390.0 167.6,392.0 169.0,390.0" fill="none" stroke="#64a2e2" stroke-width="1.05"/><polyline points="14.0,379.3 16.0,380.7 14.0,382.1 16.0,383.5 14.0,384.9 16.0,386.3 14.0,387.7 16.0,389.1 14.0,390.5" fill="none" stroke="#64a2e2" stroke-width="1.05"/><polyline points="168.0,379.3 170.0,380.7 168.0,382.1 170.0,383.5 168.0,384.9 170.0,386.3 168.0,387.7 170.0,389.1 168.0,390.5" fill="none" stroke="#64a2e2" stroke-width="1.05"/><polyline points="42.3,379.3 44.3,380.7 42.3,382.1 44.3,383.5 42.3,384.9 44.3,386.3 42.3,387.7 44.3,389.1 42.3,390.5" fill="none" stroke="#64a2e2" stroke-width="1.05"/><polyline points="156.0,379.3 158.0,380.7 156.0,382.1 158.0,383.5 156.0,384.9 158.0,386.3 156.0,387.7 158.0,389.1 156.0,390.5" fill="none" stroke="#64a2e2" stroke-width="1.05"/><rect x="27.0" y="381.3" width="16.3" height="7.7" fill="#26507e" stroke="#5d95d2" stroke-width="0" opacity="1"/><rect x="43.3" y="380.1" width="113.7" height="10.1" fill="#26517f" stroke="#5d95d2" stroke-width="0" opacity="1"/><path d="M18,382.29999999999995 l3,3 -3,3 M165,382.29999999999995 l-3,3 3,3" fill="none" stroke="#5d95d2" stroke-width="0.7"/><svg x="43.299999999999955" y="379.29999999999995" width="113.70000000000005" height="11.200000000000045" style="overflow:hidden"><text x="0.3" y="12.9" font-size="9.6" font-family="Liberation Sans" fill="#5d8fc6">Javascript training</text></svg><path d="M0,383.29999999999995h3M0,388h3" stroke="#5d95d2" stroke-width="0.8"/><polyline points="15.0,410.0 16.4,412.0 17.8,410.0 19.2,412.0 20.6,410.0 22.0,412.0 23.4,410.0 24.8,412.0 26.2,410.0 27.6,412.0 29.0,410.0 30.4,412.0 31.8,410.0 33.2,412.0 34.6,410.0 36.0,412.0 37.4,410.0 38.8,412.0 40.2,410.0 41.6,412.0 43.0,410.0 44.4,412.0 45.8,410.0 47.2,412.0 48.6,410.0 50.0,412.0 51.4,410.0 52.8,412.0 54.2,410.0 55.6,412.0 57.0,410.0 58.4,412.0 59.8,410.0 61.2,412.0 62.6,410.0 64.0,412.0 65.4,410.0 66.8,412.0 68.2,410.0 69.6,412.0 71.0,410.0 72.4,412.0 73.8,410.0 75.2,412.0 76.6,410.0 78.0,412.0 79.4,410.0 80.8,412.0 82.2,410.0 83.6,412.0 85.0,410.0 86.4,412.0 87.8,410.0 89.2,412.0 90.6,410.0 92.0,412.0 93.4,410.0 94.8,412.0 96.2,410.0 97.6,412.0 99.0,410.0 100.4,412.0 101.8,410.0 103.2,412.0 104.6,410.0 106.0,412.0 107.4,410.0 108.8,412.0 110.2,410.0 111.6,412.0 113.0,410.0 114.4,412.0 115.8,410.0 117.2,412.0 118.6,410.0 120.0,412.0 121.4,410.0 122.8,412.0 124.2,410.0 125.6,412.0 127.0,410.0 128.4,412.0 129.8,410.0 131.2,412.0 132.6,410.0 134.0,412.0 135.4,410.0 136.8,412.0 138.2,410.0 139.6,412.0 141.0,410.0 142.4,412.0 143.8,410.0 145.2,412.0 146.6,410.0 148.0,412.0 149.4,410.0 150.8,412.0 152.2,410.0 153.6,412.0 155.0,410.0 156.4,412.0 157.8,410.0 159.2,412.0 160.6,410.0 162.0,412.0 163.4,410.0 164.8,412.0 166.2,410.0 167.6,412.0 169.0,410.0 170.4,412.0 171.8,410.0 173.2,412.0 174.6,410.0 176.0,412.0 177.4,410.0 178.8,412.0 180.2,410.0 181.6,412.0 183.0,410.0 184.4,412.0 185.8,410.0 187.2,412.0 188.6,410.0 190.0,412.0 191.4,410.0 192.8,412.0" fill="none" stroke="#64a2e2" stroke-width="1.05"/><polyline points="15.0,422.0 16.4,424.0 17.8,422.0 19.2,424.0 20.6,422.0 22.0,424.0 23.4,422.0 24.8,424.0 26.2,422.0 27.6,424.0 29.0,422.0 30.4,424.0 31.8,422.0 33.2,424.0 34.6,422.0 36.0,424.0 37.4,422.0 38.8,424.0 40.2,422.0 41.6,424.0 43.0,422.0 44.4,424.0 45.8,422.0 47.2,424.0 48.6,422.0 50.0,424.0 51.4,422.0 52.8,424.0 54.2,422.0 55.6,424.0 57.0,422.0 58.4,424.0 59.8,422.0 61.2,424.0 62.6,422.0 64.0,424.0 65.4,422.0 66.8,424.0 68.2,422.0 69.6,424.0 71.0,422.0 72.4,424.0 73.8,422.0 75.2,424.0 76.6,422.0 78.0,424.0 79.4,422.0 80.8,424.0 82.2,422.0 83.6,424.0 85.0,422.0 86.4,424.0 87.8,422.0 89.2,424.0 90.6,422.0 92.0,424.0 93.4,422.0 94.8,424.0 96.2,422.0 97.6,424.0 99.0,422.0 100.4,424.0 101.8,422.0 103.2,424.0 104.6,422.0 106.0,424.0 107.4,422.0 108.8,424.0 110.2,422.0 111.6,424.0 113.0,422.0 114.4,424.0 115.8,422.0 117.2,424.0 118.6,422.0 120.0,424.0 121.4,422.0 122.8,424.0 124.2,422.0 125.6,424.0 127.0,422.0 128.4,424.0 129.8,422.0 131.2,424.0 132.6,422.0 134.0,424.0 135.4,422.0 136.8,424.0 138.2,422.0 139.6,424.0 141.0,422.0 142.4,424.0 143.8,422.0 145.2,424.0 146.6,422.0 148.0,424.0 149.4,422.0 150.8,424.0 152.2,422.0 153.6,424.0 155.0,422.0 156.4,424.0 157.8,422.0 159.2,424.0 160.6,422.0 162.0,424.0 163.4,422.0 164.8,424.0 166.2,422.0 167.6,424.0 169.0,422.0 170.4,424.0 171.8,422.0 173.2,424.0 174.6,422.0 176.0,424.0 177.4,422.0 178.8,424.0 180.2,422.0 181.6,424.0 183.0,422.0 184.4,424.0 185.8,422.0 187.2,424.0 188.6,422.0 190.0,424.0 191.4,422.0 192.8,424.0" fill="none" stroke="#64a2e2" stroke-width="1.05"/><polyline points="14.0,411.0 16.0,412.4 14.0,413.8 16.0,415.2 14.0,416.6 16.0,418.0 14.0,419.4 16.0,420.8 14.0,422.2" fill="none" stroke="#64a2e2" stroke-width="1.05"/><polyline points="192.0,411.0 194.0,412.4 192.0,413.8 194.0,415.2 192.0,416.6 194.0,418.0 192.0,419.4 194.0,420.8 192.0,422.2" fill="none" stroke="#64a2e2" stroke-width="1.05"/><polyline points="42.3,411.0 44.3,412.4 42.3,413.8 44.3,415.2 42.3,416.6 44.3,418.0 42.3,419.4 44.3,420.8 42.3,422.2" fill="none" stroke="#64a2e2" stroke-width="1.05"/><polyline points="177.0,411.0 179.0,412.4 177.0,413.8 179.0,415.2 177.0,416.6 179.0,418.0 177.0,419.4 179.0,420.8 177.0,422.2" fill="none" stroke="#64a2e2" stroke-width="1.05"/><rect x="27.0" y="413.0" width="16.3" height="8.0" fill="#26507e" stroke="#5d95d2" stroke-width="0" opacity="1"/><rect x="43.3" y="411.8" width="134.7" height="10.4" fill="#26517f" stroke="#5d95d2" stroke-width="0" opacity="1"/><path d="M18,414 l3,3 -3,3 M189,414 l-3,3 3,3" fill="none" stroke="#5d95d2" stroke-width="0.7"/><svg x="43.299999999999955" y="411" width="134.70000000000005" height="11.5" style="overflow:hidden"><text x="0.3" y="13.2" font-size="9.6" font-family="Liberation Sans" fill="#5d8fc6">Surprise Party for Matt</text></svg><path d="M0,415h3M0,420h3" stroke="#5d95d2" stroke-width="0.8"/><line x1="0.6" y1="271" x2="0.6" y2="445.5" stroke="#5d95d2" stroke-width="0.9"/><line x1="0" y1="445.5" x2="288.5" y2="445.5" stroke="#5d95d2" stroke-width="0.9"/><line x1="287.79999999999995" y1="61" x2="287.79999999999995" y2="445.5" stroke="#5d95d2" stroke-width="0.7"/></svg>
</body></html>
